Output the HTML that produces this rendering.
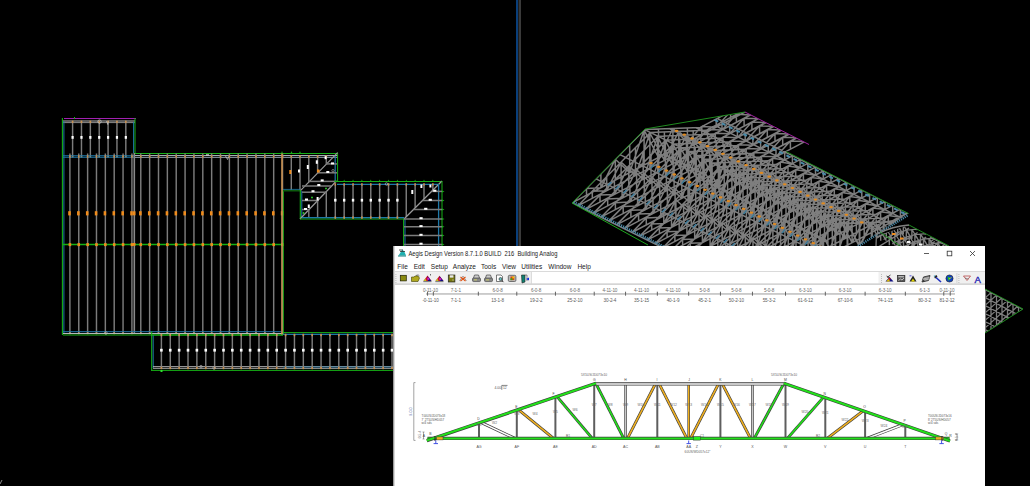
<!DOCTYPE html>
<html><head><meta charset="utf-8"><style>
html,body{margin:0;padding:0;background:#000;width:1030px;height:486px;overflow:hidden;font-family:"Liberation Sans",sans-serif}
#cad{position:absolute;left:0;top:0}
#win{position:absolute;left:393px;top:246px;width:592px;height:240px;background:#fff;overflow:hidden}
</style></head><body>
<svg id="cad" width="1030" height="486" viewBox="0 0 1030 486" shape-rendering="geometricPrecision">
<line x1="64.00" y1="118.50" x2="136.00" y2="118.50" stroke="#a020b0" stroke-width="1"/>
<line x1="63.00" y1="121.00" x2="135.00" y2="121.00" stroke="#b8b8b8" stroke-width="1"/>
<line x1="63.00" y1="122.60" x2="135.00" y2="122.60" stroke="#8a8a8a" stroke-width="1"/>
<line x1="133.60" y1="122.00" x2="133.60" y2="153.00" stroke="#1e78a8" stroke-width="1"/>
<line x1="135.00" y1="118.00" x2="135.00" y2="153.00" stroke="#16b016" stroke-width="1"/>
<line x1="72.60" y1="121.00" x2="72.60" y2="157.00" stroke="#7c7c7c" stroke-width="1.45"/>
<rect x="71.80" y="120.60" width="1.60" height="2.40" fill="#c89050"/>
<rect x="71.80" y="155.30" width="1.60" height="2.40" fill="#c89050"/>
<rect x="71.50" y="136.00" width="2.20" height="2.80" fill="#ffffff"/>
<line x1="81.47" y1="121.00" x2="81.47" y2="157.00" stroke="#7c7c7c" stroke-width="1.45"/>
<rect x="80.67" y="120.60" width="1.60" height="2.40" fill="#c89050"/>
<rect x="80.67" y="155.30" width="1.60" height="2.40" fill="#c89050"/>
<rect x="80.37" y="136.00" width="2.20" height="2.80" fill="#ffffff"/>
<line x1="90.34" y1="121.00" x2="90.34" y2="157.00" stroke="#7c7c7c" stroke-width="1.45"/>
<rect x="89.54" y="120.60" width="1.60" height="2.40" fill="#c89050"/>
<rect x="89.54" y="155.30" width="1.60" height="2.40" fill="#c89050"/>
<rect x="89.24" y="136.00" width="2.20" height="2.80" fill="#ffffff"/>
<line x1="99.21" y1="121.00" x2="99.21" y2="157.00" stroke="#7c7c7c" stroke-width="1.45"/>
<rect x="98.41" y="120.60" width="1.60" height="2.40" fill="#c89050"/>
<rect x="98.41" y="155.30" width="1.60" height="2.40" fill="#c89050"/>
<rect x="98.11" y="136.00" width="2.20" height="2.80" fill="#ffffff"/>
<line x1="108.08" y1="121.00" x2="108.08" y2="157.00" stroke="#7c7c7c" stroke-width="1.45"/>
<rect x="107.28" y="120.60" width="1.60" height="2.40" fill="#c89050"/>
<rect x="107.28" y="155.30" width="1.60" height="2.40" fill="#c89050"/>
<rect x="106.98" y="136.00" width="2.20" height="2.80" fill="#ffffff"/>
<line x1="116.95" y1="121.00" x2="116.95" y2="157.00" stroke="#7c7c7c" stroke-width="1.45"/>
<rect x="116.15" y="120.60" width="1.60" height="2.40" fill="#c89050"/>
<rect x="116.15" y="155.30" width="1.60" height="2.40" fill="#c89050"/>
<rect x="115.85" y="136.00" width="2.20" height="2.80" fill="#ffffff"/>
<line x1="125.82" y1="121.00" x2="125.82" y2="157.00" stroke="#7c7c7c" stroke-width="1.45"/>
<rect x="125.02" y="120.60" width="1.60" height="2.40" fill="#c89050"/>
<rect x="125.02" y="155.30" width="1.60" height="2.40" fill="#c89050"/>
<rect x="124.72" y="136.00" width="2.20" height="2.80" fill="#ffffff"/>
<rect x="74.00" y="117.00" width="1.00" height="2.00" fill="#16b016"/>
<line x1="62.40" y1="118.00" x2="62.40" y2="335.00" stroke="#16b016" stroke-width="1.1"/>
<line x1="63.90" y1="121.00" x2="63.90" y2="333.00" stroke="#1e78a8" stroke-width="1"/>
<line x1="63.00" y1="155.70" x2="135.00" y2="155.70" stroke="#1e78a8" stroke-width="1.1"/>
<line x1="63.00" y1="157.30" x2="135.00" y2="157.30" stroke="#1e78a8" stroke-width="1.1"/>
<line x1="135.00" y1="153.50" x2="338.00" y2="153.50" stroke="#16b016" stroke-width="1"/>
<line x1="135.00" y1="155.60" x2="338.00" y2="155.60" stroke="#b4c0c8" stroke-width="1"/>
<line x1="135.00" y1="157.40" x2="338.00" y2="157.40" stroke="#8898a4" stroke-width="1"/>
<line x1="69.90" y1="153.50" x2="69.90" y2="334.00" stroke="#7c7c7c" stroke-width="1.45"/>
<rect x="69.10" y="155.30" width="1.60" height="2.40" fill="#c89050"/>
<rect x="69.10" y="331.80" width="1.60" height="2.40" fill="#c89050"/>
<line x1="78.76" y1="153.50" x2="78.76" y2="334.00" stroke="#7c7c7c" stroke-width="1.45"/>
<rect x="77.96" y="155.30" width="1.60" height="2.40" fill="#c89050"/>
<rect x="77.96" y="331.80" width="1.60" height="2.40" fill="#c89050"/>
<line x1="87.62" y1="153.50" x2="87.62" y2="334.00" stroke="#7c7c7c" stroke-width="1.45"/>
<rect x="86.82" y="155.30" width="1.60" height="2.40" fill="#c89050"/>
<rect x="86.82" y="331.80" width="1.60" height="2.40" fill="#c89050"/>
<line x1="96.48" y1="153.50" x2="96.48" y2="334.00" stroke="#7c7c7c" stroke-width="1.45"/>
<rect x="95.68" y="155.30" width="1.60" height="2.40" fill="#c89050"/>
<rect x="95.68" y="331.80" width="1.60" height="2.40" fill="#c89050"/>
<line x1="105.34" y1="153.50" x2="105.34" y2="334.00" stroke="#7c7c7c" stroke-width="1.45"/>
<rect x="104.54" y="155.30" width="1.60" height="2.40" fill="#c89050"/>
<rect x="104.54" y="331.80" width="1.60" height="2.40" fill="#c89050"/>
<line x1="114.20" y1="153.50" x2="114.20" y2="334.00" stroke="#7c7c7c" stroke-width="1.45"/>
<rect x="113.40" y="155.30" width="1.60" height="2.40" fill="#c89050"/>
<rect x="113.40" y="331.80" width="1.60" height="2.40" fill="#c89050"/>
<line x1="123.06" y1="153.50" x2="123.06" y2="334.00" stroke="#7c7c7c" stroke-width="1.45"/>
<rect x="122.26" y="155.30" width="1.60" height="2.40" fill="#c89050"/>
<rect x="122.26" y="331.80" width="1.60" height="2.40" fill="#c89050"/>
<line x1="131.92" y1="153.50" x2="131.92" y2="334.00" stroke="#7c7c7c" stroke-width="1.45"/>
<rect x="131.12" y="155.30" width="1.60" height="2.40" fill="#c89050"/>
<rect x="131.12" y="331.80" width="1.60" height="2.40" fill="#c89050"/>
<line x1="140.78" y1="153.50" x2="140.78" y2="334.00" stroke="#7c7c7c" stroke-width="1.45"/>
<rect x="139.98" y="155.30" width="1.60" height="2.40" fill="#c89050"/>
<rect x="139.98" y="331.80" width="1.60" height="2.40" fill="#c89050"/>
<line x1="149.64" y1="153.50" x2="149.64" y2="334.00" stroke="#7c7c7c" stroke-width="1.45"/>
<rect x="148.84" y="155.30" width="1.60" height="2.40" fill="#c89050"/>
<rect x="148.84" y="331.80" width="1.60" height="2.40" fill="#c89050"/>
<line x1="158.50" y1="153.50" x2="158.50" y2="334.00" stroke="#7c7c7c" stroke-width="1.45"/>
<rect x="157.70" y="155.30" width="1.60" height="2.40" fill="#c89050"/>
<rect x="157.70" y="331.80" width="1.60" height="2.40" fill="#c89050"/>
<line x1="167.36" y1="153.50" x2="167.36" y2="334.00" stroke="#7c7c7c" stroke-width="1.45"/>
<rect x="166.56" y="155.30" width="1.60" height="2.40" fill="#c89050"/>
<rect x="166.56" y="331.80" width="1.60" height="2.40" fill="#c89050"/>
<line x1="176.22" y1="153.50" x2="176.22" y2="334.00" stroke="#7c7c7c" stroke-width="1.45"/>
<rect x="175.42" y="155.30" width="1.60" height="2.40" fill="#c89050"/>
<rect x="175.42" y="331.80" width="1.60" height="2.40" fill="#c89050"/>
<line x1="185.08" y1="153.50" x2="185.08" y2="334.00" stroke="#7c7c7c" stroke-width="1.45"/>
<rect x="184.28" y="155.30" width="1.60" height="2.40" fill="#c89050"/>
<rect x="184.28" y="331.80" width="1.60" height="2.40" fill="#c89050"/>
<line x1="193.94" y1="153.50" x2="193.94" y2="334.00" stroke="#7c7c7c" stroke-width="1.45"/>
<rect x="193.14" y="155.30" width="1.60" height="2.40" fill="#c89050"/>
<rect x="193.14" y="331.80" width="1.60" height="2.40" fill="#c89050"/>
<line x1="202.80" y1="153.50" x2="202.80" y2="334.00" stroke="#7c7c7c" stroke-width="1.45"/>
<rect x="202.00" y="155.30" width="1.60" height="2.40" fill="#c89050"/>
<rect x="202.00" y="331.80" width="1.60" height="2.40" fill="#c89050"/>
<line x1="211.66" y1="153.50" x2="211.66" y2="334.00" stroke="#7c7c7c" stroke-width="1.45"/>
<rect x="210.86" y="155.30" width="1.60" height="2.40" fill="#c89050"/>
<rect x="210.86" y="331.80" width="1.60" height="2.40" fill="#c89050"/>
<line x1="220.52" y1="153.50" x2="220.52" y2="334.00" stroke="#7c7c7c" stroke-width="1.45"/>
<rect x="219.72" y="155.30" width="1.60" height="2.40" fill="#c89050"/>
<rect x="219.72" y="331.80" width="1.60" height="2.40" fill="#c89050"/>
<line x1="229.38" y1="153.50" x2="229.38" y2="334.00" stroke="#7c7c7c" stroke-width="1.45"/>
<rect x="228.58" y="155.30" width="1.60" height="2.40" fill="#c89050"/>
<rect x="228.58" y="331.80" width="1.60" height="2.40" fill="#c89050"/>
<line x1="238.24" y1="153.50" x2="238.24" y2="334.00" stroke="#7c7c7c" stroke-width="1.45"/>
<rect x="237.44" y="155.30" width="1.60" height="2.40" fill="#c89050"/>
<rect x="237.44" y="331.80" width="1.60" height="2.40" fill="#c89050"/>
<line x1="247.10" y1="153.50" x2="247.10" y2="334.00" stroke="#7c7c7c" stroke-width="1.45"/>
<rect x="246.30" y="155.30" width="1.60" height="2.40" fill="#c89050"/>
<rect x="246.30" y="331.80" width="1.60" height="2.40" fill="#c89050"/>
<line x1="255.96" y1="153.50" x2="255.96" y2="334.00" stroke="#7c7c7c" stroke-width="1.45"/>
<rect x="255.16" y="155.30" width="1.60" height="2.40" fill="#c89050"/>
<rect x="255.16" y="331.80" width="1.60" height="2.40" fill="#c89050"/>
<line x1="264.82" y1="153.50" x2="264.82" y2="334.00" stroke="#7c7c7c" stroke-width="1.45"/>
<rect x="264.02" y="155.30" width="1.60" height="2.40" fill="#c89050"/>
<rect x="264.02" y="331.80" width="1.60" height="2.40" fill="#c89050"/>
<line x1="273.68" y1="153.50" x2="273.68" y2="334.00" stroke="#7c7c7c" stroke-width="1.45"/>
<rect x="272.88" y="155.30" width="1.60" height="2.40" fill="#c89050"/>
<rect x="272.88" y="331.80" width="1.60" height="2.40" fill="#c89050"/>
<line x1="282.54" y1="153.50" x2="282.54" y2="334.00" stroke="#7c7c7c" stroke-width="1.45"/>
<rect x="281.74" y="155.30" width="1.60" height="2.40" fill="#c89050"/>
<rect x="281.74" y="331.80" width="1.60" height="2.40" fill="#c89050"/>
<line x1="134.30" y1="153.00" x2="134.30" y2="334.00" stroke="#8a8a8a" stroke-width="1.6"/>
<line x1="63.00" y1="244.50" x2="283.00" y2="244.50" stroke="#16b016" stroke-width="1.3"/>
<rect x="68.20" y="211.20" width="2.60" height="4.20" fill="#f08c1c"/>
<rect x="68.60" y="243.10" width="2.60" height="3.00" fill="#f08c1c"/>
<rect x="77.06" y="211.20" width="2.60" height="4.20" fill="#f08c1c"/>
<rect x="77.46" y="243.10" width="2.60" height="3.00" fill="#f08c1c"/>
<rect x="85.92" y="211.20" width="2.60" height="4.20" fill="#f08c1c"/>
<rect x="86.32" y="243.10" width="2.60" height="3.00" fill="#f08c1c"/>
<rect x="94.78" y="211.20" width="2.60" height="4.20" fill="#f08c1c"/>
<rect x="95.18" y="243.10" width="2.60" height="3.00" fill="#f08c1c"/>
<rect x="103.64" y="211.20" width="2.60" height="4.20" fill="#f08c1c"/>
<rect x="104.04" y="243.10" width="2.60" height="3.00" fill="#f08c1c"/>
<rect x="112.50" y="211.20" width="2.60" height="4.20" fill="#f08c1c"/>
<rect x="112.90" y="243.10" width="2.60" height="3.00" fill="#f08c1c"/>
<rect x="121.36" y="211.20" width="2.60" height="4.20" fill="#f08c1c"/>
<rect x="121.76" y="243.10" width="2.60" height="3.00" fill="#f08c1c"/>
<rect x="130.22" y="211.20" width="2.60" height="4.20" fill="#f08c1c"/>
<rect x="130.62" y="243.10" width="2.60" height="3.00" fill="#f08c1c"/>
<rect x="139.08" y="211.20" width="2.60" height="4.20" fill="#f08c1c"/>
<rect x="139.48" y="243.10" width="2.60" height="3.00" fill="#f08c1c"/>
<rect x="147.94" y="211.20" width="2.60" height="4.20" fill="#f08c1c"/>
<rect x="148.34" y="243.10" width="2.60" height="3.00" fill="#f08c1c"/>
<rect x="156.80" y="211.20" width="2.60" height="4.20" fill="#f08c1c"/>
<rect x="157.20" y="243.10" width="2.60" height="3.00" fill="#f08c1c"/>
<rect x="165.66" y="211.20" width="2.60" height="4.20" fill="#f08c1c"/>
<rect x="166.06" y="243.10" width="2.60" height="3.00" fill="#f08c1c"/>
<rect x="174.52" y="211.20" width="2.60" height="4.20" fill="#f08c1c"/>
<rect x="174.92" y="243.10" width="2.60" height="3.00" fill="#f08c1c"/>
<rect x="183.38" y="211.20" width="2.60" height="4.20" fill="#f08c1c"/>
<rect x="183.78" y="243.10" width="2.60" height="3.00" fill="#f08c1c"/>
<rect x="192.24" y="211.20" width="2.60" height="4.20" fill="#f08c1c"/>
<rect x="192.64" y="243.10" width="2.60" height="3.00" fill="#f08c1c"/>
<rect x="201.10" y="211.20" width="2.60" height="4.20" fill="#f08c1c"/>
<rect x="201.50" y="243.10" width="2.60" height="3.00" fill="#f08c1c"/>
<rect x="209.96" y="211.20" width="2.60" height="4.20" fill="#f08c1c"/>
<rect x="210.36" y="243.10" width="2.60" height="3.00" fill="#f08c1c"/>
<rect x="218.82" y="211.20" width="2.60" height="4.20" fill="#f08c1c"/>
<rect x="219.22" y="243.10" width="2.60" height="3.00" fill="#f08c1c"/>
<rect x="227.68" y="211.20" width="2.60" height="4.20" fill="#f08c1c"/>
<rect x="228.08" y="243.10" width="2.60" height="3.00" fill="#f08c1c"/>
<rect x="236.54" y="211.20" width="2.60" height="4.20" fill="#f08c1c"/>
<rect x="236.94" y="243.10" width="2.60" height="3.00" fill="#f08c1c"/>
<rect x="245.40" y="211.20" width="2.60" height="4.20" fill="#f08c1c"/>
<rect x="245.80" y="243.10" width="2.60" height="3.00" fill="#f08c1c"/>
<rect x="254.26" y="211.20" width="2.60" height="4.20" fill="#f08c1c"/>
<rect x="254.66" y="243.10" width="2.60" height="3.00" fill="#f08c1c"/>
<rect x="263.12" y="211.20" width="2.60" height="4.20" fill="#f08c1c"/>
<rect x="263.52" y="243.10" width="2.60" height="3.00" fill="#f08c1c"/>
<rect x="271.98" y="211.20" width="2.60" height="4.20" fill="#f08c1c"/>
<rect x="272.38" y="243.10" width="2.60" height="3.00" fill="#f08c1c"/>
<rect x="280.84" y="211.20" width="2.60" height="4.20" fill="#f08c1c"/>
<rect x="281.24" y="243.10" width="2.60" height="3.00" fill="#f08c1c"/>
<rect x="133.00" y="211.30" width="2.50" height="4.00" fill="#f08c1c"/>
<rect x="133.00" y="243.00" width="2.50" height="2.80" fill="#f08c1c"/>
<line x1="63.00" y1="331.70" x2="283.00" y2="331.70" stroke="#1e78a8" stroke-width="1"/>
<line x1="63.00" y1="333.50" x2="283.00" y2="333.50" stroke="#b8b8b8" stroke-width="1"/>
<line x1="63.00" y1="335.00" x2="283.00" y2="335.00" stroke="#16b016" stroke-width="1"/>
<circle cx="106" cy="333" r="1.3" fill="none" stroke="#bbb" stroke-width="0.6"/>
<line x1="282.00" y1="153.00" x2="282.00" y2="335.00" stroke="#c89050" stroke-width="1.6"/>
<line x1="283.40" y1="190.00" x2="283.40" y2="335.00" stroke="#16b016" stroke-width="0.9"/>
<path d="M281,153.5 L282,151 L283,153.5 Z" fill="#16b016"/>
<path d="M290.5,153.5 L291.5,151 L292.5,153.5 Z" fill="#16b016"/>
<path d="M299,153.5 L300,151 L301,153.5 Z" fill="#16b016"/>
<line x1="337.60" y1="152.60" x2="337.60" y2="181.50" stroke="#16b016" stroke-width="1"/>
<line x1="335.20" y1="156.00" x2="335.20" y2="182.00" stroke="#1e78a8" stroke-width="1.2"/>
<line x1="337.60" y1="152.60" x2="300.00" y2="191.20" stroke="#9a9a9a" stroke-width="1.2"/>
<line x1="291.30" y1="156.00" x2="291.30" y2="190.00" stroke="#7c7c7c" stroke-width="1.45"/>
<rect x="290.50" y="155.30" width="1.60" height="2.40" fill="#c89050"/>
<line x1="300.00" y1="156.00" x2="300.00" y2="190.00" stroke="#7c7c7c" stroke-width="1.45"/>
<rect x="299.20" y="155.30" width="1.60" height="2.40" fill="#c89050"/>
<line x1="308.80" y1="156.00" x2="308.80" y2="182.17" stroke="#7c7c7c" stroke-width="1.45"/>
<rect x="308.00" y="155.30" width="1.60" height="2.40" fill="#c89050"/>
<line x1="317.60" y1="156.00" x2="317.60" y2="173.13" stroke="#7c7c7c" stroke-width="1.45"/>
<rect x="316.80" y="155.30" width="1.60" height="2.40" fill="#c89050"/>
<line x1="326.30" y1="156.00" x2="326.30" y2="164.20" stroke="#7c7c7c" stroke-width="1.45"/>
<rect x="325.50" y="155.30" width="1.60" height="2.40" fill="#c89050"/>
<line x1="283.00" y1="190.60" x2="300.00" y2="190.60" stroke="#0d5a0d" stroke-width="1.8"/>
<line x1="283.00" y1="189.40" x2="300.00" y2="189.40" stroke="#1e78a8" stroke-width="0.8"/>
<line x1="326.30" y1="163.90" x2="337.00" y2="163.90" stroke="#7c7c7c" stroke-width="1.5"/>
<line x1="317.60" y1="172.80" x2="337.00" y2="172.80" stroke="#7c7c7c" stroke-width="1.5"/>
<line x1="308.80" y1="181.40" x2="337.00" y2="181.40" stroke="#7c7c7c" stroke-width="1.5"/>
<rect x="331.00" y="162.40" width="3.00" height="2.00" fill="#ffffff"/>
<rect x="326.30" y="171.00" width="3.00" height="2.00" fill="#ffffff"/>
<rect x="320.70" y="179.40" width="3.00" height="2.00" fill="#ffffff"/>
<rect x="306.80" y="165.00" width="2.00" height="4.00" fill="#ffffff"/>
<rect x="298.00" y="169.50" width="2.00" height="3.00" fill="#ffffff"/>
<rect x="315.80" y="160.30" width="2.00" height="3.50" fill="#ffffff"/>
<rect x="324.60" y="156.20" width="2.00" height="3.00" fill="#ffffff"/>
<rect x="289.30" y="170.00" width="2.00" height="4.00" fill="#f08c1c"/>
<rect x="317.00" y="169.50" width="2.50" height="3.00" fill="#f08c1c"/>
<circle cx="333" cy="170.7" r="1.2" fill="none" stroke="#bbb" stroke-width="0.6"/>
<line x1="300.30" y1="190.00" x2="300.30" y2="219.00" stroke="#16b016" stroke-width="1.1"/>
<line x1="301.80" y1="191.00" x2="301.80" y2="218.00" stroke="#1e78a8" stroke-width="1"/>
<line x1="335.50" y1="182.00" x2="300.00" y2="219.00" stroke="#9a9a9a" stroke-width="1.2"/>
<line x1="302.00" y1="186.00" x2="331.50" y2="186.00" stroke="#7c7c7c" stroke-width="1.5"/>
<line x1="302.00" y1="192.20" x2="326.60" y2="192.20" stroke="#7c7c7c" stroke-width="1.5"/>
<line x1="302.00" y1="200.50" x2="318.80" y2="200.50" stroke="#7c7c7c" stroke-width="1.5"/>
<line x1="302.00" y1="209.50" x2="309.50" y2="209.50" stroke="#7c7c7c" stroke-width="1.5"/>
<line x1="308.80" y1="209.83" x2="308.80" y2="218.00" stroke="#7c7c7c" stroke-width="1.45"/>
<line x1="317.60" y1="200.66" x2="317.60" y2="218.00" stroke="#7c7c7c" stroke-width="1.45"/>
<line x1="326.30" y1="191.59" x2="326.30" y2="218.00" stroke="#7c7c7c" stroke-width="1.45"/>
<rect x="317.30" y="184.00" width="3.00" height="2.00" fill="#ffffff"/>
<rect x="311.50" y="190.20" width="3.00" height="2.00" fill="#ffffff"/>
<rect x="305.00" y="198.50" width="3.00" height="2.00" fill="#ffffff"/>
<rect x="304.00" y="208.00" width="3.00" height="2.00" fill="#ffffff"/>
<rect x="307.80" y="204.50" width="2.00" height="3.50" fill="#ffffff"/>
<rect x="316.60" y="197.00" width="2.00" height="3.50" fill="#ffffff"/>
<rect x="311.20" y="196.70" width="1.60" height="1.60" fill="#30e030"/>
<rect x="325.20" y="187.70" width="1.60" height="1.60" fill="#30e030"/>
<rect x="302.70" y="212.20" width="1.60" height="1.60" fill="#30e030"/>
<line x1="335.00" y1="181.50" x2="442.00" y2="181.50" stroke="#16b016" stroke-width="1"/>
<line x1="337.00" y1="184.40" x2="438.60" y2="184.40" stroke="#1e78a8" stroke-width="1.3"/>
<line x1="300.00" y1="219.00" x2="404.00" y2="219.00" stroke="#16b016" stroke-width="1"/>
<line x1="302.00" y1="217.60" x2="404.00" y2="217.60" stroke="#1e78a8" stroke-width="1.2"/>
<line x1="335.30" y1="184.40" x2="335.30" y2="218.00" stroke="#7c7c7c" stroke-width="1.45"/>
<rect x="334.50" y="183.20" width="1.60" height="2.40" fill="#c89050"/>
<rect x="334.50" y="216.40" width="1.60" height="2.40" fill="#c89050"/>
<rect x="334.10" y="198.80" width="2.40" height="2.80" fill="#ffffff"/>
<path d="M334.3,182 L335.3,179.5 L336.3,182 Z" fill="#16b016"/>
<line x1="344.17" y1="184.40" x2="344.17" y2="218.00" stroke="#7c7c7c" stroke-width="1.45"/>
<rect x="343.37" y="183.20" width="1.60" height="2.40" fill="#c89050"/>
<rect x="343.37" y="216.40" width="1.60" height="2.40" fill="#c89050"/>
<rect x="342.97" y="198.80" width="2.40" height="2.80" fill="#ffffff"/>
<path d="M343.17,182 L344.17,179.5 L345.17,182 Z" fill="#16b016"/>
<line x1="353.04" y1="184.40" x2="353.04" y2="218.00" stroke="#7c7c7c" stroke-width="1.45"/>
<rect x="352.24" y="183.20" width="1.60" height="2.40" fill="#c89050"/>
<rect x="352.24" y="216.40" width="1.60" height="2.40" fill="#c89050"/>
<rect x="351.84" y="198.80" width="2.40" height="2.80" fill="#ffffff"/>
<path d="M352.04,182 L353.04,179.5 L354.04,182 Z" fill="#16b016"/>
<line x1="361.91" y1="184.40" x2="361.91" y2="218.00" stroke="#7c7c7c" stroke-width="1.45"/>
<rect x="361.11" y="183.20" width="1.60" height="2.40" fill="#c89050"/>
<rect x="361.11" y="216.40" width="1.60" height="2.40" fill="#c89050"/>
<rect x="360.71" y="198.80" width="2.40" height="2.80" fill="#ffffff"/>
<path d="M360.91,182 L361.91,179.5 L362.91,182 Z" fill="#16b016"/>
<line x1="370.78" y1="184.40" x2="370.78" y2="218.00" stroke="#7c7c7c" stroke-width="1.45"/>
<rect x="369.98" y="183.20" width="1.60" height="2.40" fill="#c89050"/>
<rect x="369.98" y="216.40" width="1.60" height="2.40" fill="#c89050"/>
<rect x="369.58" y="198.80" width="2.40" height="2.80" fill="#ffffff"/>
<path d="M369.78000000000003,182 L370.78000000000003,179.5 L371.78000000000003,182 Z" fill="#16b016"/>
<line x1="379.65" y1="184.40" x2="379.65" y2="218.00" stroke="#7c7c7c" stroke-width="1.45"/>
<rect x="378.85" y="183.20" width="1.60" height="2.40" fill="#c89050"/>
<rect x="378.85" y="216.40" width="1.60" height="2.40" fill="#c89050"/>
<rect x="378.45" y="198.80" width="2.40" height="2.80" fill="#ffffff"/>
<path d="M378.65,182 L379.65,179.5 L380.65,182 Z" fill="#16b016"/>
<line x1="388.52" y1="184.40" x2="388.52" y2="218.00" stroke="#7c7c7c" stroke-width="1.45"/>
<rect x="387.72" y="183.20" width="1.60" height="2.40" fill="#c89050"/>
<rect x="387.72" y="216.40" width="1.60" height="2.40" fill="#c89050"/>
<rect x="387.32" y="198.80" width="2.40" height="2.80" fill="#ffffff"/>
<path d="M387.52,182 L388.52,179.5 L389.52,182 Z" fill="#16b016"/>
<line x1="397.39" y1="184.40" x2="397.39" y2="218.00" stroke="#7c7c7c" stroke-width="1.45"/>
<rect x="396.59" y="183.20" width="1.60" height="2.40" fill="#c89050"/>
<rect x="396.59" y="216.40" width="1.60" height="2.40" fill="#c89050"/>
<rect x="396.19" y="198.80" width="2.40" height="2.80" fill="#ffffff"/>
<path d="M396.39,182 L397.39,179.5 L398.39,182 Z" fill="#16b016"/>
<line x1="406.26" y1="184.40" x2="406.26" y2="216.74" stroke="#7c7c7c" stroke-width="1.45"/>
<rect x="405.46" y="183.20" width="1.60" height="2.40" fill="#c89050"/>
<path d="M405.26,182 L406.26,179.5 L407.26,182 Z" fill="#16b016"/>
<line x1="415.13" y1="184.40" x2="415.13" y2="207.87" stroke="#7c7c7c" stroke-width="1.45"/>
<rect x="414.33" y="183.20" width="1.60" height="2.40" fill="#c89050"/>
<path d="M414.13,182 L415.13,179.5 L416.13,182 Z" fill="#16b016"/>
<line x1="424.00" y1="184.40" x2="424.00" y2="199.00" stroke="#7c7c7c" stroke-width="1.45"/>
<rect x="423.20" y="183.20" width="1.60" height="2.40" fill="#c89050"/>
<path d="M423.0,182 L424.0,179.5 L425.0,182 Z" fill="#16b016"/>
<line x1="432.87" y1="184.40" x2="432.87" y2="190.13" stroke="#7c7c7c" stroke-width="1.45"/>
<rect x="432.07" y="183.20" width="1.60" height="2.40" fill="#c89050"/>
<path d="M431.87,182 L432.87,179.5 L433.87,182 Z" fill="#16b016"/>
<rect x="411.30" y="190.00" width="2.00" height="4.00" fill="#ffffff"/>
<rect x="420.40" y="184.50" width="2.00" height="3.50" fill="#ffffff"/>
<rect x="429.40" y="184.50" width="2.00" height="3.00" fill="#ffffff"/>
<circle cx="386.5" cy="184" r="1.3" fill="none" stroke="#bbb" stroke-width="0.6"/>
<line x1="442.00" y1="181.00" x2="404.00" y2="219.00" stroke="#9a9a9a" stroke-width="1.2"/>
<line x1="442.00" y1="181.00" x2="442.00" y2="246.00" stroke="#16b016" stroke-width="1"/>
<line x1="438.60" y1="184.00" x2="438.60" y2="246.00" stroke="#1e78a8" stroke-width="1.3"/>
<line x1="403.60" y1="219.00" x2="403.60" y2="246.00" stroke="#16b016" stroke-width="1"/>
<line x1="405.00" y1="219.00" x2="405.00" y2="246.00" stroke="#1e78a8" stroke-width="1"/>
<line x1="431.60" y1="191.40" x2="442.00" y2="191.40" stroke="#7c7c7c" stroke-width="1.5"/>
<rect x="433.20" y="189.70" width="3.20" height="2.00" fill="#ffffff"/>
<path d="M442,190.4 L444.5,191.4 L442,192.4 Z" fill="#16b016"/>
<line x1="422.50" y1="200.50" x2="442.00" y2="200.50" stroke="#7c7c7c" stroke-width="1.5"/>
<rect x="428.65" y="198.80" width="3.20" height="2.00" fill="#ffffff"/>
<path d="M442,199.5 L444.5,200.5 L442,201.5 Z" fill="#16b016"/>
<line x1="413.50" y1="209.50" x2="442.00" y2="209.50" stroke="#7c7c7c" stroke-width="1.5"/>
<rect x="424.15" y="207.80" width="3.20" height="2.00" fill="#ffffff"/>
<path d="M442,208.5 L444.5,209.5 L442,210.5 Z" fill="#16b016"/>
<line x1="404.10" y1="218.90" x2="442.00" y2="218.90" stroke="#7c7c7c" stroke-width="1.5"/>
<rect x="419.45" y="217.20" width="3.20" height="2.00" fill="#ffffff"/>
<path d="M442,217.9 L444.5,218.9 L442,219.9 Z" fill="#16b016"/>
<line x1="404.00" y1="226.80" x2="442.00" y2="226.80" stroke="#7c7c7c" stroke-width="1.5"/>
<rect x="419.40" y="225.10" width="3.20" height="2.00" fill="#ffffff"/>
<path d="M442,225.8 L444.5,226.8 L442,227.8 Z" fill="#16b016"/>
<line x1="404.00" y1="235.50" x2="442.00" y2="235.50" stroke="#7c7c7c" stroke-width="1.5"/>
<rect x="419.40" y="233.80" width="3.20" height="2.00" fill="#ffffff"/>
<path d="M442,234.5 L444.5,235.5 L442,236.5 Z" fill="#16b016"/>
<line x1="404.00" y1="244.40" x2="442.00" y2="244.40" stroke="#7c7c7c" stroke-width="1.5"/>
<rect x="419.40" y="242.70" width="3.20" height="2.00" fill="#ffffff"/>
<path d="M442,243.4 L444.5,244.4 L442,245.4 Z" fill="#16b016"/>
<line x1="151.70" y1="331.60" x2="151.70" y2="370.40" stroke="#16b016" stroke-width="1.1"/>
<line x1="153.20" y1="335.00" x2="153.20" y2="368.00" stroke="#1e78a8" stroke-width="1"/>
<line x1="151.00" y1="335.00" x2="283.00" y2="335.00" stroke="#16b016" stroke-width="1"/>
<line x1="283.00" y1="332.60" x2="400.00" y2="332.60" stroke="#16b016" stroke-width="1"/>
<line x1="283.00" y1="334.30" x2="400.00" y2="334.30" stroke="#1e78a8" stroke-width="1.2"/>
<line x1="151.00" y1="370.40" x2="400.00" y2="370.40" stroke="#16b016" stroke-width="1"/>
<line x1="153.00" y1="366.70" x2="400.00" y2="366.70" stroke="#b8b8b8" stroke-width="1"/>
<line x1="153.00" y1="368.40" x2="400.00" y2="368.40" stroke="#9a9a9a" stroke-width="1"/>
<line x1="283.00" y1="367.00" x2="400.00" y2="367.00" stroke="#1e78a8" stroke-width="0.8"/>
<line x1="161.40" y1="334.00" x2="161.40" y2="369.00" stroke="#7c7c7c" stroke-width="1.45"/>
<rect x="160.60" y="333.80" width="1.60" height="2.40" fill="#c89050"/>
<rect x="160.60" y="366.80" width="1.60" height="2.40" fill="#c89050"/>
<rect x="160.10" y="348.80" width="2.60" height="2.80" fill="#ffffff"/>
<line x1="170.27" y1="334.00" x2="170.27" y2="369.00" stroke="#7c7c7c" stroke-width="1.45"/>
<rect x="169.47" y="333.80" width="1.60" height="2.40" fill="#c89050"/>
<rect x="169.47" y="366.80" width="1.60" height="2.40" fill="#c89050"/>
<rect x="168.97" y="348.80" width="2.60" height="2.80" fill="#ffffff"/>
<line x1="179.14" y1="334.00" x2="179.14" y2="369.00" stroke="#7c7c7c" stroke-width="1.45"/>
<rect x="178.34" y="333.80" width="1.60" height="2.40" fill="#c89050"/>
<rect x="178.34" y="366.80" width="1.60" height="2.40" fill="#c89050"/>
<rect x="177.84" y="348.80" width="2.60" height="2.80" fill="#ffffff"/>
<line x1="188.01" y1="334.00" x2="188.01" y2="369.00" stroke="#7c7c7c" stroke-width="1.45"/>
<rect x="187.21" y="333.80" width="1.60" height="2.40" fill="#c89050"/>
<rect x="187.21" y="366.80" width="1.60" height="2.40" fill="#c89050"/>
<rect x="186.71" y="348.80" width="2.60" height="2.80" fill="#ffffff"/>
<line x1="196.88" y1="334.00" x2="196.88" y2="369.00" stroke="#7c7c7c" stroke-width="1.45"/>
<rect x="196.08" y="333.80" width="1.60" height="2.40" fill="#c89050"/>
<rect x="196.08" y="366.80" width="1.60" height="2.40" fill="#c89050"/>
<rect x="195.58" y="348.80" width="2.60" height="2.80" fill="#ffffff"/>
<line x1="205.75" y1="334.00" x2="205.75" y2="369.00" stroke="#7c7c7c" stroke-width="1.45"/>
<rect x="204.95" y="333.80" width="1.60" height="2.40" fill="#c89050"/>
<rect x="204.95" y="366.80" width="1.60" height="2.40" fill="#c89050"/>
<rect x="204.45" y="348.80" width="2.60" height="2.80" fill="#ffffff"/>
<line x1="214.62" y1="334.00" x2="214.62" y2="369.00" stroke="#7c7c7c" stroke-width="1.45"/>
<rect x="213.82" y="333.80" width="1.60" height="2.40" fill="#c89050"/>
<rect x="213.82" y="366.80" width="1.60" height="2.40" fill="#c89050"/>
<rect x="213.32" y="348.80" width="2.60" height="2.80" fill="#ffffff"/>
<line x1="223.49" y1="334.00" x2="223.49" y2="369.00" stroke="#7c7c7c" stroke-width="1.45"/>
<rect x="222.69" y="333.80" width="1.60" height="2.40" fill="#c89050"/>
<rect x="222.69" y="366.80" width="1.60" height="2.40" fill="#c89050"/>
<rect x="222.19" y="348.80" width="2.60" height="2.80" fill="#ffffff"/>
<line x1="232.36" y1="334.00" x2="232.36" y2="369.00" stroke="#7c7c7c" stroke-width="1.45"/>
<rect x="231.56" y="333.80" width="1.60" height="2.40" fill="#c89050"/>
<rect x="231.56" y="366.80" width="1.60" height="2.40" fill="#c89050"/>
<rect x="231.06" y="348.80" width="2.60" height="2.80" fill="#ffffff"/>
<line x1="241.23" y1="334.00" x2="241.23" y2="369.00" stroke="#7c7c7c" stroke-width="1.45"/>
<rect x="240.43" y="333.80" width="1.60" height="2.40" fill="#c89050"/>
<rect x="240.43" y="366.80" width="1.60" height="2.40" fill="#c89050"/>
<rect x="239.93" y="348.80" width="2.60" height="2.80" fill="#ffffff"/>
<line x1="250.10" y1="334.00" x2="250.10" y2="369.00" stroke="#7c7c7c" stroke-width="1.45"/>
<rect x="249.30" y="333.80" width="1.60" height="2.40" fill="#c89050"/>
<rect x="249.30" y="366.80" width="1.60" height="2.40" fill="#c89050"/>
<rect x="248.80" y="348.80" width="2.60" height="2.80" fill="#ffffff"/>
<line x1="258.97" y1="334.00" x2="258.97" y2="369.00" stroke="#7c7c7c" stroke-width="1.45"/>
<rect x="258.17" y="333.80" width="1.60" height="2.40" fill="#c89050"/>
<rect x="258.17" y="366.80" width="1.60" height="2.40" fill="#c89050"/>
<rect x="257.67" y="348.80" width="2.60" height="2.80" fill="#ffffff"/>
<line x1="267.84" y1="334.00" x2="267.84" y2="369.00" stroke="#7c7c7c" stroke-width="1.45"/>
<rect x="267.04" y="333.80" width="1.60" height="2.40" fill="#c89050"/>
<rect x="267.04" y="366.80" width="1.60" height="2.40" fill="#c89050"/>
<rect x="266.54" y="348.80" width="2.60" height="2.80" fill="#ffffff"/>
<line x1="276.71" y1="334.00" x2="276.71" y2="369.00" stroke="#7c7c7c" stroke-width="1.45"/>
<rect x="275.91" y="333.80" width="1.60" height="2.40" fill="#c89050"/>
<rect x="275.91" y="366.80" width="1.60" height="2.40" fill="#c89050"/>
<rect x="275.41" y="348.80" width="2.60" height="2.80" fill="#ffffff"/>
<line x1="285.58" y1="334.00" x2="285.58" y2="369.00" stroke="#7c7c7c" stroke-width="1.45"/>
<rect x="284.78" y="333.80" width="1.60" height="2.40" fill="#c89050"/>
<rect x="284.78" y="366.80" width="1.60" height="2.40" fill="#c89050"/>
<rect x="284.28" y="348.80" width="2.60" height="2.80" fill="#ffffff"/>
<line x1="294.45" y1="334.00" x2="294.45" y2="369.00" stroke="#7c7c7c" stroke-width="1.45"/>
<rect x="293.65" y="333.80" width="1.60" height="2.40" fill="#c89050"/>
<rect x="293.65" y="366.80" width="1.60" height="2.40" fill="#c89050"/>
<rect x="293.15" y="348.80" width="2.60" height="2.80" fill="#ffffff"/>
<line x1="303.32" y1="334.00" x2="303.32" y2="369.00" stroke="#7c7c7c" stroke-width="1.45"/>
<rect x="302.52" y="333.80" width="1.60" height="2.40" fill="#c89050"/>
<rect x="302.52" y="366.80" width="1.60" height="2.40" fill="#c89050"/>
<rect x="302.02" y="348.80" width="2.60" height="2.80" fill="#ffffff"/>
<line x1="312.19" y1="334.00" x2="312.19" y2="369.00" stroke="#7c7c7c" stroke-width="1.45"/>
<rect x="311.39" y="333.80" width="1.60" height="2.40" fill="#c89050"/>
<rect x="311.39" y="366.80" width="1.60" height="2.40" fill="#c89050"/>
<rect x="310.89" y="348.80" width="2.60" height="2.80" fill="#ffffff"/>
<line x1="321.06" y1="334.00" x2="321.06" y2="369.00" stroke="#7c7c7c" stroke-width="1.45"/>
<rect x="320.26" y="333.80" width="1.60" height="2.40" fill="#c89050"/>
<rect x="320.26" y="366.80" width="1.60" height="2.40" fill="#c89050"/>
<rect x="319.76" y="348.80" width="2.60" height="2.80" fill="#ffffff"/>
<line x1="329.93" y1="334.00" x2="329.93" y2="369.00" stroke="#7c7c7c" stroke-width="1.45"/>
<rect x="329.13" y="333.80" width="1.60" height="2.40" fill="#c89050"/>
<rect x="329.13" y="366.80" width="1.60" height="2.40" fill="#c89050"/>
<rect x="328.63" y="348.80" width="2.60" height="2.80" fill="#ffffff"/>
<line x1="338.80" y1="334.00" x2="338.80" y2="369.00" stroke="#7c7c7c" stroke-width="1.45"/>
<rect x="338.00" y="333.80" width="1.60" height="2.40" fill="#c89050"/>
<rect x="338.00" y="366.80" width="1.60" height="2.40" fill="#c89050"/>
<rect x="337.50" y="348.80" width="2.60" height="2.80" fill="#ffffff"/>
<line x1="347.67" y1="334.00" x2="347.67" y2="369.00" stroke="#7c7c7c" stroke-width="1.45"/>
<rect x="346.87" y="333.80" width="1.60" height="2.40" fill="#c89050"/>
<rect x="346.87" y="366.80" width="1.60" height="2.40" fill="#c89050"/>
<rect x="346.37" y="348.80" width="2.60" height="2.80" fill="#ffffff"/>
<line x1="356.54" y1="334.00" x2="356.54" y2="369.00" stroke="#7c7c7c" stroke-width="1.45"/>
<rect x="355.74" y="333.80" width="1.60" height="2.40" fill="#c89050"/>
<rect x="355.74" y="366.80" width="1.60" height="2.40" fill="#c89050"/>
<rect x="355.24" y="348.80" width="2.60" height="2.80" fill="#ffffff"/>
<line x1="365.41" y1="334.00" x2="365.41" y2="369.00" stroke="#7c7c7c" stroke-width="1.45"/>
<rect x="364.61" y="333.80" width="1.60" height="2.40" fill="#c89050"/>
<rect x="364.61" y="366.80" width="1.60" height="2.40" fill="#c89050"/>
<rect x="364.11" y="348.80" width="2.60" height="2.80" fill="#ffffff"/>
<line x1="374.28" y1="334.00" x2="374.28" y2="369.00" stroke="#7c7c7c" stroke-width="1.45"/>
<rect x="373.48" y="333.80" width="1.60" height="2.40" fill="#c89050"/>
<rect x="373.48" y="366.80" width="1.60" height="2.40" fill="#c89050"/>
<rect x="372.98" y="348.80" width="2.60" height="2.80" fill="#ffffff"/>
<line x1="383.15" y1="334.00" x2="383.15" y2="369.00" stroke="#7c7c7c" stroke-width="1.45"/>
<rect x="382.35" y="333.80" width="1.60" height="2.40" fill="#c89050"/>
<rect x="382.35" y="366.80" width="1.60" height="2.40" fill="#c89050"/>
<rect x="381.85" y="348.80" width="2.60" height="2.80" fill="#ffffff"/>
<line x1="392.02" y1="334.00" x2="392.02" y2="369.00" stroke="#7c7c7c" stroke-width="1.45"/>
<rect x="391.22" y="333.80" width="1.60" height="2.40" fill="#c89050"/>
<rect x="391.22" y="366.80" width="1.60" height="2.40" fill="#c89050"/>
<rect x="390.72" y="348.80" width="2.60" height="2.80" fill="#ffffff"/>
<rect x="160.50" y="370.00" width="2.00" height="2.00" fill="#30e030"/>
<circle cx="201" cy="366.6" r="1.3" fill="none" stroke="#bbb" stroke-width="0.6"/>
<circle cx="214" cy="368" r="1.3" fill="none" stroke="#bbb" stroke-width="0.6"/>
<circle cx="99.5" cy="121.6" r="1.7" fill="none" stroke="#ccc" stroke-width="0.7"/>
<path d="M106.5,121 L107.8,124.5 L108.3,121.5" fill="none" stroke="#ccc" stroke-width="0.7"/>
<rect x="206" y="154.3" width="3" height="1.4" fill="#ccc"/>
<path d="M225.5,156 L227.5,159.5 L228.8,156.5" fill="none" stroke="#ccc" stroke-width="0.7"/>
<rect x="516.0" y="0.0" width="2.0" height="246.0" fill="#0a3f7a"/>
<rect x="518.5" y="0.0" width="2.5" height="246.0" fill="#3a3a3a"/>
<defs><clipPath id="c1"><polygon points="572,203 645,129 745,112 809,144.5 799,150 786,151.5 908.5,213.5 858,246 648,246"/><polygon points="877,246 877,236 909,225 949,246"/><polygon points="985,289 1023,309 985,333"/></clipPath></defs>
<g clip-path="url(#c1)">
<path d="M745.0,112.0L572.1,202.9M572.1,202.9L644.6,129.6M644.6,129.6L700.3,127.4M700.3,127.4L745.0,103.9M745.0,112.0L745.0,103.9M572.1,202.9L572.1,202.9M572.1,202.9L586.5,188.4M586.5,195.3L586.5,188.4M586.5,188.4L600.9,187.8M600.9,187.8L600.9,173.8M600.9,187.8L615.3,159.2M615.3,180.2L615.3,159.2M615.3,159.2L629.7,172.6M629.7,172.6L629.7,144.6M629.7,172.6L644.1,130.1M644.1,165.0L644.1,130.1M644.1,130.1L658.5,157.5M658.5,157.5L658.5,129.1M658.5,157.5L672.9,128.5M672.9,149.9L672.9,128.5M672.9,128.5L687.4,142.3M687.4,142.3L687.4,127.9M687.4,142.3L701.8,126.6M701.8,134.7L701.8,126.6M701.8,126.6L716.2,127.2M716.2,127.2L716.2,119.0M716.2,127.2L730.6,111.5M730.6,119.6L730.6,111.5M730.6,111.5L745.0,112.0M745.0,112.0L745.0,103.9M750.8,114.9L577.9,205.8M577.9,205.8L650.4,132.5M650.4,132.5L706.1,130.3M706.1,130.3L750.8,106.8M750.8,114.9L750.8,106.8M577.9,205.8L577.9,205.8M577.9,205.8L592.3,191.2M592.3,198.2L592.3,191.2M592.3,191.2L606.7,190.7M606.7,190.7L606.7,176.7M606.7,190.7L621.1,162.1M621.1,183.1L621.1,162.1M621.1,162.1L635.5,175.5M635.5,175.5L635.5,147.5M635.5,175.5L649.9,133.0M649.9,167.9L649.9,133.0M649.9,133.0L664.4,160.3M664.4,160.3L664.4,132.0M664.4,160.3L678.8,131.4M678.8,152.8L678.8,131.4M678.8,131.4L693.2,145.2M693.2,145.2L693.2,130.8M693.2,145.2L707.6,129.5M707.6,137.6L707.6,129.5M707.6,129.5L722.0,130.0M722.0,130.0L722.0,121.9M722.0,130.0L736.4,114.3M736.4,122.5L736.4,114.3M736.4,114.3L750.8,114.9M750.8,114.9L750.8,106.8M758.5,118.7L585.6,209.6M585.6,209.6L658.1,136.3M658.1,136.3L713.8,134.1M713.8,134.1L758.5,110.6M758.5,118.7L758.5,110.6M585.6,209.6L585.6,209.6M585.6,209.6L600.0,195.0M600.0,202.0L600.0,195.0M600.0,195.0L614.4,194.5M614.4,194.5L614.4,180.5M614.4,194.5L628.8,165.9M628.8,186.9L628.8,165.9M628.8,165.9L643.2,179.3M643.2,179.3L643.2,151.3M643.2,179.3L657.7,136.8M657.7,171.7L657.7,136.8M657.7,136.8L672.1,164.2M672.1,164.2L672.1,135.8M672.1,164.2L686.5,135.2M686.5,156.6L686.5,135.2M686.5,135.2L700.9,149.0M700.9,149.0L700.9,134.6M700.9,149.0L715.3,133.3M715.3,141.4L715.3,133.3M715.3,133.3L729.7,133.8M729.7,133.8L729.7,125.7M729.7,133.8L744.1,118.2M744.1,126.3L744.1,118.2M744.1,118.2L758.5,118.7M758.5,118.7L758.5,110.6M766.3,122.5L593.3,213.4M593.3,213.4L665.8,140.1M665.8,140.1L721.6,137.9M721.6,137.9L766.3,114.4M766.3,122.5L766.3,114.4M593.3,213.4L593.3,213.4M593.3,213.4L607.7,198.9M607.7,205.9L607.7,198.9M607.7,198.9L622.1,198.3M622.1,198.3L622.1,184.3M622.1,198.3L636.6,169.7M636.6,190.7L636.6,169.7M636.6,169.7L651.0,183.1M651.0,183.1L651.0,155.2M651.0,183.1L665.4,140.6M665.4,175.5L665.4,140.6M665.4,140.6L679.8,168.0M679.8,168.0L679.8,139.6M679.8,168.0L694.2,139.0M694.2,160.4L694.2,139.0M694.2,139.0L708.6,152.8M708.6,152.8L708.6,138.4M708.6,152.8L723.0,137.1M723.0,145.2L723.0,137.1M723.0,137.1L737.4,137.7M737.4,137.7L737.4,129.5M737.4,137.7L751.9,122.0M751.9,130.1L751.9,122.0M751.9,122.0L766.3,122.5M766.3,122.5L766.3,114.4M774.0,126.3L601.0,217.2M601.0,217.2L673.6,143.9M673.6,143.9L729.3,141.7M729.3,141.7L774.0,118.2M774.0,126.3L774.0,118.2M601.0,217.2L601.0,217.2M601.0,217.2L615.4,202.7M615.4,209.7L615.4,202.7M615.4,202.7L629.9,202.1M629.9,202.1L629.9,188.1M629.9,202.1L644.3,173.5M644.3,194.5L644.3,173.5M644.3,173.5L658.7,186.9M658.7,186.9L658.7,159.0M658.7,186.9L673.1,144.4M673.1,179.4L673.1,144.4M673.1,144.4L687.5,171.8M687.5,171.8L687.5,143.4M687.5,171.8L701.9,142.8M701.9,164.2L701.9,142.8M701.9,142.8L716.3,156.6M716.3,156.6L716.3,142.2M716.3,156.6L730.7,140.9M730.7,149.1L730.7,140.9M730.7,140.9L745.2,141.5M745.2,141.5L745.2,133.4M745.2,141.5L759.6,125.8M759.6,133.9L759.6,125.8M759.6,125.8L774.0,126.3M774.0,126.3L774.0,118.2M781.7,130.1L608.7,221.1M608.7,221.1L681.3,147.7M681.3,147.7L737.0,145.5M737.0,145.5L781.7,122.0M781.7,130.1L781.7,122.0M608.7,221.1L608.7,221.1M608.7,221.1L623.2,206.5M623.2,213.5L623.2,206.5M623.2,206.5L637.6,205.9M637.6,205.9L637.6,191.9M637.6,205.9L652.0,177.4M652.0,198.3L652.0,177.4M652.0,177.4L666.4,190.8M666.4,190.8L666.4,162.8M666.4,190.8L680.8,148.2M680.8,183.2L680.8,148.2M680.8,148.2L695.2,175.6M695.2,175.6L695.2,147.2M695.2,175.6L709.6,146.6M709.6,168.0L709.6,146.6M709.6,146.6L724.0,160.4M724.0,160.4L724.0,146.0M724.0,160.4L738.5,144.7M738.5,152.9L738.5,144.7M738.5,144.7L752.9,145.3M752.9,145.3L752.9,137.2M752.9,145.3L767.3,129.6M767.3,137.7L767.3,129.6M767.3,129.6L781.7,130.1M781.7,130.1L781.7,122.0M789.4,134.0L616.5,224.9M616.5,224.9L689.0,151.6M689.0,151.6L744.7,149.3M744.7,149.3L789.4,125.8M789.4,134.0L789.4,125.8M616.5,224.9L616.5,224.9M616.5,224.9L630.9,210.3M630.9,217.3L630.9,210.3M630.9,210.3L645.3,209.7M645.3,209.7L645.3,195.7M645.3,209.7L659.7,181.2M659.7,202.1L659.7,181.2M659.7,181.2L674.1,194.6M674.1,194.6L674.1,166.6M674.1,194.6L688.5,152.0M688.5,187.0L688.5,152.0M688.5,152.0L702.9,179.4M702.9,179.4L702.9,151.0M702.9,179.4L717.4,150.4M717.4,171.8L717.4,150.4M717.4,150.4L731.8,164.3M731.8,164.3L731.8,149.9M731.8,164.3L746.2,148.6M746.2,156.7L746.2,148.6M746.2,148.6L760.6,149.1M760.6,149.1L760.6,141.0M760.6,149.1L775.0,133.4M775.0,141.5L775.0,133.4M775.0,133.4L789.4,134.0M789.4,134.0L789.4,125.8M797.1,137.8L624.2,228.7M624.2,228.7L696.7,155.4M696.7,155.4L752.4,153.2M752.4,153.2L797.1,129.6M797.1,137.8L797.1,129.6M624.2,228.7L624.2,228.7M624.2,228.7L638.6,214.1M638.6,221.1L638.6,214.1M638.6,214.1L653.0,213.5M653.0,213.5L653.0,199.6M653.0,213.5L667.4,185.0M667.4,206.0L667.4,185.0M667.4,185.0L681.8,198.4M681.8,198.4L681.8,170.4M681.8,198.4L696.2,155.8M696.2,190.8L696.2,155.8M696.2,155.8L710.7,183.2M710.7,183.2L710.7,154.8M710.7,183.2L725.1,154.3M725.1,175.7L725.1,154.3M725.1,154.3L739.5,168.1M739.5,168.1L739.5,153.7M739.5,168.1L753.9,152.4M753.9,160.5L753.9,152.4M753.9,152.4L768.3,152.9M768.3,152.9L768.3,144.8M768.3,152.9L782.7,137.2M782.7,145.3L782.7,137.2M782.7,137.2L797.1,137.8M797.1,137.8L797.1,129.6M804.8,141.6L631.9,232.5M631.9,232.5L704.4,159.2M704.4,159.2L760.1,157.0M760.1,157.0L804.8,133.5M804.8,141.6L804.8,133.5M631.9,232.5L631.9,232.5M631.9,232.5L646.3,217.9M646.3,224.9L646.3,217.9M646.3,217.9L660.7,217.3M660.7,217.3L660.7,203.4M660.7,217.3L675.1,188.8M675.1,209.8L675.1,188.8M675.1,188.8L689.5,202.2M689.5,202.2L689.5,174.2M689.5,202.2L704.0,159.7M704.0,194.6L704.0,159.7M704.0,159.7L718.4,187.0M718.4,187.0L718.4,158.7M718.4,187.0L732.8,158.1M732.8,179.5L732.8,158.1M732.8,158.1L747.2,171.9M747.2,171.9L747.2,157.5M747.2,171.9L761.6,156.2M761.6,164.3L761.6,156.2M761.6,156.2L776.0,156.7M776.0,156.7L776.0,148.6M776.0,156.7L790.4,141.0M790.4,149.2L790.4,141.0M790.4,141.0L804.8,141.6M804.8,141.6L804.8,133.5M784.7,160.1L639.6,236.3M639.6,236.3L712.1,163.0M712.1,163.0L767.9,160.8M767.9,160.8L784.7,151.9M784.7,160.1L784.7,151.9M639.6,236.3L639.6,236.3M639.6,236.3L651.7,224.1M651.7,230.0L651.7,224.1M651.7,224.1L663.8,223.6M663.8,223.6L663.8,211.9M663.8,223.6L675.9,199.7M675.9,217.3L675.9,199.7M675.9,199.7L688.0,210.9M688.0,210.9L688.0,187.4M688.0,210.9L700.1,175.2M700.1,204.5L700.1,175.2M700.1,175.2L712.1,198.2M712.1,198.2L712.1,163.0M712.1,198.2L724.2,162.5M724.2,191.8L724.2,162.5M724.2,162.5L736.3,185.5M736.3,185.5L736.3,162.1M736.3,185.5L748.4,161.6M748.4,179.1L748.4,161.6M748.4,161.6L760.5,172.8M760.5,172.8L760.5,161.1M760.5,172.8L772.6,158.3M772.6,166.4L772.6,158.3M772.6,158.3L784.7,160.1M784.7,160.1L784.7,151.9M792.4,163.9L647.3,240.1M647.3,240.1L719.9,166.8M719.9,166.8L775.6,164.6M775.6,164.6L792.4,155.8M792.4,163.9L792.4,155.8M647.3,240.1L647.3,240.1M647.3,240.1L659.4,227.9M659.4,233.8L659.4,227.9M659.4,227.9L671.5,227.4M671.5,227.4L671.5,215.7M671.5,227.4L683.6,203.5M683.6,221.1L683.6,203.5M683.6,203.5L695.7,214.7M695.7,214.7L695.7,191.3M695.7,214.7L707.8,179.0M707.8,208.4L707.8,179.0M707.8,179.0L719.9,202.0M719.9,202.0L719.9,166.8M719.9,202.0L731.9,166.4M731.9,195.6L731.9,166.4M731.9,166.4L744.0,189.3M744.0,189.3L744.0,165.9M744.0,189.3L756.1,165.4M756.1,182.9L756.1,165.4M756.1,165.4L768.2,176.6M768.2,176.6L768.2,164.9M768.2,176.6L780.3,162.1M780.3,170.2L780.3,162.1M780.3,162.1L792.4,163.9M792.4,163.9L792.4,155.8M800.1,167.7L655.0,243.9M655.0,243.9L727.6,170.6M727.6,170.6L783.3,168.4M783.3,168.4L800.1,159.6M800.1,167.7L800.1,159.6M655.0,243.9L655.0,243.9M655.0,243.9L667.1,231.7M667.1,237.6L667.1,231.7M667.1,231.7L679.2,231.2M679.2,231.2L679.2,219.5M679.2,231.2L691.3,207.3M691.3,224.9L691.3,207.3M691.3,207.3L703.4,218.5M703.4,218.5L703.4,195.1M703.4,218.5L715.5,182.8M715.5,212.2L715.5,182.8M715.5,182.8L727.6,205.8M727.6,205.8L727.6,170.6M727.6,205.8L739.7,170.2M739.7,199.5L739.7,170.2M739.7,170.2L751.8,193.1M751.8,193.1L751.8,169.7M751.8,193.1L763.8,169.2M763.8,186.8L763.8,169.2M763.8,169.2L775.9,180.4M775.9,180.4L775.9,168.7M775.9,180.4L788.0,165.9M788.0,174.0L788.0,165.9M788.0,165.9L800.1,167.7M800.1,167.7L800.1,159.6M807.8,171.5L662.8,247.8M662.8,247.8L735.3,174.4M735.3,174.4L791.0,172.2M791.0,172.2L807.8,163.4M807.8,171.5L807.8,163.4M662.8,247.8L662.8,247.8M662.8,247.8L674.9,235.5M674.9,241.4L674.9,235.5M674.9,235.5L686.9,235.0M686.9,235.0L686.9,223.3M686.9,235.0L699.0,211.1M699.0,228.7L699.0,211.1M699.0,211.1L711.1,222.3M711.1,222.3L711.1,198.9M711.1,222.3L723.2,186.7M723.2,216.0L723.2,186.7M723.2,186.7L735.3,209.6M735.3,209.6L735.3,174.4M735.3,209.6L747.4,174.0M747.4,203.3L747.4,174.0M747.4,174.0L759.5,196.9M759.5,196.9L759.5,173.5M759.5,196.9L771.6,173.0M771.6,190.6L771.6,173.0M771.6,173.0L783.6,184.2M783.6,184.2L783.6,172.5M783.6,184.2L795.7,169.7M795.7,177.9L795.7,169.7M795.7,169.7L807.8,171.5M807.8,171.5L807.8,163.4M815.5,175.3L670.5,251.6M670.5,251.6L743.0,178.3M743.0,178.3L798.7,176.0M798.7,176.0L815.5,167.2M815.5,175.3L815.5,167.2M670.5,251.6L670.5,251.6M670.5,251.6L682.6,239.4M682.6,245.2L682.6,239.4M682.6,239.4L694.7,238.9M694.7,238.9L694.7,227.1M694.7,238.9L706.7,214.9M706.7,232.5L706.7,214.9M706.7,214.9L718.8,226.2M718.8,226.2L718.8,202.7M718.8,226.2L730.9,190.5M730.9,219.8L730.9,190.5M730.9,190.5L743.0,213.4M743.0,213.4L743.0,178.3M743.0,213.4L755.1,177.8M755.1,207.1L755.1,177.8M755.1,177.8L767.2,200.7M767.2,200.7L767.2,177.3M767.2,200.7L779.3,176.8M779.3,194.4L779.3,176.8M779.3,176.8L791.4,188.0M791.4,188.0L791.4,176.3M791.4,188.0L803.4,173.6M803.4,181.7L803.4,173.6M803.4,173.6L815.5,175.3M815.5,175.3L815.5,167.2M823.3,179.1L678.2,255.4M678.2,255.4L750.7,182.1M750.7,182.1L806.4,179.9M806.4,179.9L823.3,171.0M823.3,179.1L823.3,171.0M678.2,255.4L678.2,255.4M678.2,255.4L690.3,243.2M690.3,249.0L690.3,243.2M690.3,243.2L702.4,242.7M702.4,242.7L702.4,230.9M702.4,242.7L714.5,218.7M714.5,236.3L714.5,218.7M714.5,218.7L726.6,230.0M726.6,230.0L726.6,206.5M726.6,230.0L738.6,194.3M738.6,223.6L738.6,194.3M738.6,194.3L750.7,217.3M750.7,217.3L750.7,182.1M750.7,217.3L762.8,181.6M762.8,210.9L762.8,181.6M762.8,181.6L774.9,204.5M774.9,204.5L774.9,181.1M774.9,204.5L787.0,180.6M787.0,198.2L787.0,180.6M787.0,180.6L799.1,191.8M799.1,191.8L799.1,180.1M799.1,191.8L811.2,177.4M811.2,185.5L811.2,177.4M811.2,177.4L823.3,179.1M823.3,179.1L823.3,171.0M831.0,182.9L685.9,259.2M685.9,259.2L758.4,185.9M758.4,185.9L814.2,183.7M814.2,183.7L831.0,174.8M831.0,182.9L831.0,174.8M685.9,259.2L685.9,259.2M685.9,259.2L698.0,247.0M698.0,252.8L698.0,247.0M698.0,247.0L710.1,246.5M710.1,246.5L710.1,234.8M710.1,246.5L722.2,222.5M722.2,240.1L722.2,222.5M722.2,222.5L734.3,233.8M734.3,233.8L734.3,210.3M734.3,233.8L746.4,198.1M746.4,227.4L746.4,198.1M746.4,198.1L758.4,221.1M758.4,221.1L758.4,185.9M758.4,221.1L770.5,185.4M770.5,214.7L770.5,185.4M770.5,185.4L782.6,208.4M782.6,208.4L782.6,184.9M782.6,208.4L794.7,184.5M794.7,202.0L794.7,184.5M794.7,184.5L806.8,195.7M806.8,195.7L806.8,184.0M806.8,195.7L818.9,181.2M818.9,189.3L818.9,181.2M818.9,181.2L831.0,182.9M831.0,182.9L831.0,174.8M838.7,186.8L693.6,263.0M693.6,263.0L766.2,189.7M766.2,189.7L821.9,187.5M821.9,187.5L838.7,178.6M838.7,186.8L838.7,178.6M693.6,263.0L693.6,263.0M693.6,263.0L705.7,250.8M705.7,256.7L705.7,250.8M705.7,250.8L717.8,250.3M717.8,250.3L717.8,238.6M717.8,250.3L729.9,226.4M729.9,244.0L729.9,226.4M729.9,226.4L742.0,237.6M742.0,237.6L742.0,214.1M742.0,237.6L754.1,201.9M754.1,231.2L754.1,201.9M754.1,201.9L766.2,224.9M766.2,224.9L766.2,189.7M766.2,224.9L778.2,189.2M778.2,218.5L778.2,189.2M778.2,189.2L790.3,212.2M790.3,212.2L790.3,188.8M790.3,212.2L802.4,188.3M802.4,205.8L802.4,188.3M802.4,188.3L814.5,199.5M814.5,199.5L814.5,187.8M814.5,199.5L826.6,185.0M826.6,193.1L826.6,185.0M826.6,185.0L838.7,186.8M838.7,186.8L838.7,178.6M846.4,190.6L701.4,266.8M701.4,266.8L773.9,193.5M773.9,193.5L829.6,191.3M829.6,191.3L846.4,182.5M846.4,190.6L846.4,182.5M701.4,266.8L701.4,266.8M701.4,266.8L713.4,254.6M713.4,260.5L713.4,254.6M713.4,254.6L725.5,254.1M725.5,254.1L725.5,242.4M725.5,254.1L737.6,230.2M737.6,247.8L737.6,230.2M737.6,230.2L749.7,241.4M749.7,241.4L749.7,218.0M749.7,241.4L761.8,205.7M761.8,235.1L761.8,205.7M761.8,205.7L773.9,228.7M773.9,228.7L773.9,193.5M773.9,228.7L786.0,193.1M786.0,222.3L786.0,193.1M786.0,193.1L798.1,216.0M798.1,216.0L798.1,192.6M798.1,216.0L810.1,192.1M810.1,209.6L810.1,192.1M810.1,192.1L822.2,203.3M822.2,203.3L822.2,191.6M822.2,203.3L834.3,188.8M834.3,196.9L834.3,188.8M834.3,188.8L846.4,190.6M846.4,190.6L846.4,182.5M854.1,194.4L709.1,270.6M709.1,270.6L781.6,197.3M781.6,197.3L837.3,195.1M837.3,195.1L854.1,186.3M854.1,194.4L854.1,186.3M709.1,270.6L709.1,270.6M709.1,270.6L721.2,258.4M721.2,264.3L721.2,258.4M721.2,258.4L733.2,257.9M733.2,257.9L733.2,246.2M733.2,257.9L745.3,234.0M745.3,251.6L745.3,234.0M745.3,234.0L757.4,245.2M757.4,245.2L757.4,221.8M757.4,245.2L769.5,209.5M769.5,238.9L769.5,209.5M769.5,209.5L781.6,232.5M781.6,232.5L781.6,197.3M781.6,232.5L793.7,196.9M793.7,226.2L793.7,196.9M793.7,196.9L805.8,219.8M805.8,219.8L805.8,196.4M805.8,219.8L817.9,195.9M817.9,213.5L817.9,195.9M817.9,195.9L829.9,207.1M829.9,207.1L829.9,195.4M829.9,207.1L842.0,192.6M842.0,200.7L842.0,192.6M842.0,192.6L854.1,194.4M854.1,194.4L854.1,186.3M861.8,198.2L716.8,274.5M716.8,274.5L789.3,201.1M789.3,201.1L845.0,198.9M845.0,198.9L861.8,190.1M861.8,198.2L861.8,190.1M716.8,274.5L716.8,274.5M716.8,274.5L728.9,262.2M728.9,268.1L728.9,262.2M728.9,262.2L741.0,261.7M741.0,261.7L741.0,250.0M741.0,261.7L753.0,237.8M753.0,255.4L753.0,237.8M753.0,237.8L765.1,249.0M765.1,249.0L765.1,225.6M765.1,249.0L777.2,213.4M777.2,242.7L777.2,213.4M777.2,213.4L789.3,236.3M789.3,236.3L789.3,201.1M789.3,236.3L801.4,200.7M801.4,230.0L801.4,200.7M801.4,200.7L813.5,223.6M813.5,223.6L813.5,200.2M813.5,223.6L825.6,199.7M825.6,217.3L825.6,199.7M825.6,199.7L837.7,210.9M837.7,210.9L837.7,199.2M837.7,210.9L849.8,196.4M849.8,204.6L849.8,196.4M849.8,196.4L861.8,198.2M861.8,198.2L861.8,190.1M869.6,202.0L724.5,278.3M724.5,278.3L797.0,205.0M797.0,205.0L852.7,202.7M852.7,202.7L869.6,193.9M869.6,202.0L869.6,193.9M724.5,278.3L724.5,278.3M724.5,278.3L736.6,266.1M736.6,271.9L736.6,266.1M736.6,266.1L748.7,265.6M748.7,265.6L748.7,253.8M748.7,265.6L760.8,241.6M760.8,259.2L760.8,241.6M760.8,241.6L772.9,252.9M772.9,252.9L772.9,229.4M772.9,252.9L784.9,217.2M784.9,246.5L784.9,217.2M784.9,217.2L797.0,240.1M797.0,240.1L797.0,205.0M797.0,240.1L809.1,204.5M809.1,233.8L809.1,204.5M809.1,204.5L821.2,227.4M821.2,227.4L821.2,204.0M821.2,227.4L833.3,203.5M833.3,221.1L833.3,203.5M833.3,203.5L845.4,214.7M845.4,214.7L845.4,203.0M845.4,214.7L857.5,200.2M857.5,208.4L857.5,200.2M857.5,200.2L869.6,202.0M869.6,202.0L869.6,193.9M877.3,205.8L732.2,282.1M732.2,282.1L804.7,208.8M804.7,208.8L860.5,206.5M860.5,206.5L877.3,197.7M877.3,205.8L877.3,197.7M732.2,282.1L732.2,282.1M732.2,282.1L744.3,269.9M744.3,275.7L744.3,269.9M744.3,269.9L756.4,269.4M756.4,269.4L756.4,257.6M756.4,269.4L768.5,245.4M768.5,263.0L768.5,245.4M768.5,245.4L780.6,256.7M780.6,256.7L780.6,233.2M780.6,256.7L792.7,221.0M792.7,250.3L792.7,221.0M792.7,221.0L804.7,244.0M804.7,244.0L804.7,208.8M804.7,244.0L816.8,208.3M816.8,237.6L816.8,208.3M816.8,208.3L828.9,231.2M828.9,231.2L828.9,207.8M828.9,231.2L841.0,207.3M841.0,224.9L841.0,207.3M841.0,207.3L853.1,218.5M853.1,218.5L853.1,206.8M853.1,218.5L865.2,204.1M865.2,212.2L865.2,204.1M865.2,204.1L877.3,205.8M877.3,205.8L877.3,197.7M885.0,209.6L739.9,285.9M739.9,285.9L812.5,212.6M812.5,212.6L868.2,210.4M868.2,210.4L885.0,201.5M885.0,209.6L885.0,201.5M739.9,285.9L739.9,285.9M739.9,285.9L752.0,273.7M752.0,279.5L752.0,273.7M752.0,273.7L764.1,273.2M764.1,273.2L764.1,261.5M764.1,273.2L776.2,249.2M776.2,266.8L776.2,249.2M776.2,249.2L788.3,260.5M788.3,260.5L788.3,237.0M788.3,260.5L800.4,224.8M800.4,254.1L800.4,224.8M800.4,224.8L812.5,247.8M812.5,247.8L812.5,212.6M812.5,247.8L824.5,212.1M824.5,241.4L824.5,212.1M824.5,212.1L836.6,235.1M836.6,235.1L836.6,211.6M836.6,235.1L848.7,211.2M848.7,228.7L848.7,211.2M848.7,211.2L860.8,222.4M860.8,222.4L860.8,210.7M860.8,222.4L872.9,207.9M872.9,216.0L872.9,207.9M872.9,207.9L885.0,209.6M885.0,209.6L885.0,201.5M892.7,213.5L747.7,289.7M747.7,289.7L820.2,216.4M820.2,216.4L875.9,214.2M875.9,214.2L892.7,205.3M892.7,213.5L892.7,205.3M747.7,289.7L747.7,289.7M747.7,289.7L759.7,277.5M759.7,283.4L759.7,277.5M759.7,277.5L771.8,277.0M771.8,277.0L771.8,265.3M771.8,277.0L783.9,253.1M783.9,270.6L783.9,253.1M783.9,253.1L796.0,264.3M796.0,264.3L796.0,240.8M796.0,264.3L808.1,228.6M808.1,257.9L808.1,228.6M808.1,228.6L820.2,251.6M820.2,251.6L820.2,216.4M820.2,251.6L832.3,215.9M832.3,245.2L832.3,215.9M832.3,215.9L844.4,238.9M844.4,238.9L844.4,215.5M844.4,238.9L856.4,215.0M856.4,232.5L856.4,215.0M856.4,215.0L868.5,226.2M868.5,226.2L868.5,214.5M868.5,226.2L880.6,211.7M880.6,219.8L880.6,211.7M880.6,211.7L892.7,213.5M892.7,213.5L892.7,205.3M900.4,217.3L755.4,293.5M755.4,293.5L827.9,220.2M827.9,220.2L883.6,218.0M883.6,218.0L900.4,209.2M900.4,217.3L900.4,209.2M755.4,293.5L755.4,293.5M755.4,293.5L767.5,281.3M767.5,287.2L767.5,281.3M767.5,281.3L779.5,280.8M779.5,280.8L779.5,269.1M779.5,280.8L791.6,256.9M791.6,274.5L791.6,256.9M791.6,256.9L803.7,268.1M803.7,268.1L803.7,244.7M803.7,268.1L815.8,232.4M815.8,261.8L815.8,232.4M815.8,232.4L827.9,255.4M827.9,255.4L827.9,220.2M827.9,255.4L840.0,219.8M840.0,249.0L840.0,219.8M840.0,219.8L852.1,242.7M852.1,242.7L852.1,219.3M852.1,242.7L864.2,218.8M864.2,236.3L864.2,218.8M864.2,218.8L876.2,230.0M876.2,230.0L876.2,218.3M876.2,230.0L888.3,215.5M888.3,223.6L888.3,215.5M888.3,215.5L900.4,217.3M900.4,217.3L900.4,209.2M908.1,221.1L763.1,297.3M763.1,297.3L835.6,224.0M835.6,224.0L891.3,221.8M891.3,221.8L908.1,213.0M908.1,221.1L908.1,213.0M763.1,297.3L763.1,297.3M763.1,297.3L775.2,285.1M775.2,291.0L775.2,285.1M775.2,285.1L787.3,284.6M787.3,284.6L787.3,272.9M787.3,284.6L799.3,260.7M799.3,278.3L799.3,260.7M799.3,260.7L811.4,271.9M811.4,271.9L811.4,248.5M811.4,271.9L823.5,236.2M823.5,265.6L823.5,236.2M823.5,236.2L835.6,259.2M835.6,259.2L835.6,224.0M835.6,259.2L847.7,223.6M847.7,252.9L847.7,223.6M847.7,223.6L859.8,246.5M859.8,246.5L859.8,223.1M859.8,246.5L871.9,222.6M871.9,240.1L871.9,222.6M871.9,222.6L884.0,233.8M884.0,233.8L884.0,222.1M884.0,233.8L896.1,219.3M896.1,227.4L896.1,219.3M896.1,219.3L908.1,221.1M908.1,221.1L908.1,213.0M907.6,220.8L762.6,297.1M762.6,297.1L835.1,223.8M835.1,223.8L890.8,221.6M890.8,221.6L907.6,212.7M907.6,220.8L907.6,212.7M762.6,297.1L762.6,297.1M762.6,297.1L774.7,284.9M774.7,290.7L774.7,284.9M774.7,284.9L786.8,284.4M786.8,284.4L786.8,272.7M786.8,284.4L798.8,260.4M798.8,278.0L798.8,260.4M798.8,260.4L810.9,271.7M810.9,271.7L810.9,248.2M810.9,271.7L823.0,236.0M823.0,265.3L823.0,236.0M823.0,236.0L835.1,259.0M835.1,259.0L835.1,223.8M835.1,259.0L847.2,223.3M847.2,252.6L847.2,223.3M847.2,223.3L859.3,246.3M859.3,246.3L859.3,222.8M859.3,246.3L871.4,222.3M871.4,239.9L871.4,222.3M871.4,222.3L883.5,233.5M883.5,233.5L883.5,221.9M883.5,233.5L895.5,219.1M895.5,227.2L895.5,219.1M895.5,219.1L907.6,220.8M907.6,220.8L907.6,212.7M572.1,202.9L762.6,297.1M717.1,126.7L907.6,220.8M717.1,118.5L907.6,212.7M644.6,129.6L835.1,223.8M669.3,128.6L859.8,222.8M619.9,154.6L810.4,248.8M695.6,127.5L886.1,221.7M596.0,178.8L786.5,272.9" stroke="#7e7e7e" stroke-width="1.5" fill="none"/>
<path d="M900.4,220.5Q884.4,219.5 866.4,230.5M900.4,223.5L866.4,244.5M894.7,220.5L894.7,229.5M894.7,220.5L900.4,229.5M889.1,221.2L889.1,230.2M889.1,221.2L894.8,230.2M883.4,222.5L883.4,231.5M883.4,222.5L889.1,231.5M877.7,224.5L877.7,233.5M877.7,224.5L883.4,233.5M872.1,227.2L872.1,236.2M872.1,227.2L877.8,236.2M909.0,225.0Q893.0,224.0 875.0,235.0M909.0,228.0L875.0,249.0M903.3,225.0L903.3,234.0M903.3,225.0L909.0,234.0M897.7,225.7L897.7,234.7M897.7,225.7L903.4,234.7M892.0,227.0L892.0,236.0M892.0,227.0L897.7,236.0M886.3,229.0L886.3,238.0M886.3,229.0L892.0,238.0M880.7,231.7L880.7,240.7M880.7,231.7L886.4,240.7M917.6,229.5Q901.6,228.5 883.6,239.5M917.6,232.5L883.6,253.5M911.9,229.5L911.9,238.5M911.9,229.5L917.6,238.5M906.3,230.2L906.3,239.2M906.3,230.2L912.0,239.2M900.6,231.5L900.6,240.5M900.6,231.5L906.3,240.5M894.9,233.5L894.9,242.5M894.9,233.5L900.6,242.5M889.3,236.2L889.3,245.2M889.3,236.2L895.0,245.2M926.2,234.0Q910.2,233.0 892.2,244.0M926.2,237.0L892.2,258.0M920.5,234.0L920.5,243.0M920.5,234.0L926.2,243.0M914.9,234.7L914.9,243.7M914.9,234.7L920.6,243.7M909.2,236.0L909.2,245.0M909.2,236.0L914.9,245.0M903.5,238.0L903.5,247.0M903.5,238.0L909.2,247.0M897.9,240.7L897.9,249.7M897.9,240.7L903.6,249.7M934.8,238.5Q918.8,237.5 900.8,248.5M934.8,241.5L900.8,262.5M929.1,238.5L929.1,247.5M929.1,238.5L934.8,247.5M923.5,239.2L923.5,248.2M923.5,239.2L929.2,248.2M917.8,240.5L917.8,249.5M917.8,240.5L923.5,249.5M912.1,242.5L912.1,251.5M912.1,242.5L917.8,251.5M906.5,245.2L906.5,254.2M906.5,245.2L912.2,254.2M943.4,243.0Q927.4,242.0 909.4,253.0M943.4,246.0L909.4,267.0M937.7,243.0L937.7,252.0M937.7,243.0L943.4,252.0M932.1,243.7L932.1,252.7M932.1,243.7L937.8,252.7M926.4,245.0L926.4,254.0M926.4,245.0L932.1,254.0M920.7,247.0L920.7,256.0M920.7,247.0L926.4,256.0M915.1,249.7L915.1,258.7M915.1,249.7L920.8,258.7M952.0,247.5Q936.0,246.5 918.0,257.5M952.0,250.5L918.0,271.5M946.3,247.5L946.3,256.5M946.3,247.5L952.0,256.5M940.7,248.2L940.7,257.2M940.7,248.2L946.4,257.2M935.0,249.5L935.0,258.5M935.0,249.5L940.7,258.5M929.3,251.5L929.3,260.5M929.3,251.5L935.0,260.5M923.7,254.2L923.7,263.2M923.7,254.2L929.4,263.2M960.6,252.0Q944.6,251.0 926.6,262.0M960.6,255.0L926.6,276.0M954.9,252.0L954.9,261.0M954.9,252.0L960.6,261.0M949.3,252.7L949.3,261.7M949.3,252.7L955.0,261.7M943.6,254.0L943.6,263.0M943.6,254.0L949.3,263.0M937.9,256.0L937.9,265.0M937.9,256.0L943.6,265.0M932.3,258.7L932.3,267.7M932.3,258.7L938.0,267.7" stroke="#7e7e7e" stroke-width="1.4" fill="none"/>
<path d="M930.0,130.0L1080.0,-5.0M930.0,137.5L1080.0,2.5M930.0,145.0L1080.0,10.0M930.0,152.5L1080.0,17.5M930.0,160.0L1080.0,25.0M930.0,167.5L1080.0,32.5M930.0,175.0L1080.0,40.0M930.0,182.5L1080.0,47.5M930.0,190.0L1080.0,55.0M930.0,197.5L1080.0,62.5M930.0,205.0L1080.0,70.0M930.0,212.5L1080.0,77.5M930.0,220.0L1080.0,85.0M930.0,227.5L1080.0,92.5M930.0,235.0L1080.0,100.0M930.0,242.5L1080.0,107.5M930.0,250.0L1080.0,115.0M930.0,257.5L1080.0,122.5M930.0,265.0L1080.0,130.0M930.0,272.5L1080.0,137.5M930.0,280.0L1080.0,145.0M930.0,287.5L1080.0,152.5M930.0,295.0L1080.0,160.0M930.0,302.5L1080.0,167.5M930.0,310.0L1080.0,175.0M930.0,317.5L1080.0,182.5M930.0,325.0L1080.0,190.0M930.0,332.5L1080.0,197.5M930.0,340.0L1080.0,205.0M930.0,347.5L1080.0,212.5M930.0,355.0L1080.0,220.0M930.0,362.5L1080.0,227.5M930.0,370.0L1080.0,235.0M930.0,377.5L1080.0,242.5M930.0,385.0L1080.0,250.0M930.0,392.5L1080.0,257.5M930.0,400.0L1080.0,265.0M930.0,407.5L1080.0,272.5M930.0,415.0L1080.0,280.0M930.0,422.5L1080.0,287.5M930.0,430.0L1080.0,295.0M930.0,437.5L1080.0,302.5M930.0,445.0L1080.0,310.0M930.0,452.5L1080.0,317.5M930.0,460.0L1080.0,325.0M930.0,467.5L1080.0,332.5M930.0,475.0L1080.0,340.0M930.0,482.5L1080.0,347.5M930.0,490.0L1080.0,355.0M930.0,497.5L1080.0,362.5M930.0,505.0L1080.0,370.0M930.0,512.5L1080.0,377.5M930.0,520.0L1080.0,385.0M930.0,527.5L1080.0,392.5M930.0,535.0L1080.0,400.0M930.0,542.5L1080.0,407.5M930.0,550.0L1080.0,415.0M930.0,557.5L1080.0,422.5M930.0,565.0L1080.0,430.0M930.0,572.5L1080.0,437.5M930.0,580.0L1080.0,445.0M930.0,587.5L1080.0,452.5M930.0,595.0L1080.0,460.0M930.0,602.5L1080.0,467.5M930.0,610.0L1080.0,475.0M930.0,617.5L1080.0,482.5M930.0,625.0L1080.0,490.0M930.0,133.0L1080.0,211.0M930.0,141.0L1080.0,219.0M930.0,149.0L1080.0,227.0M930.0,157.0L1080.0,235.0M930.0,165.0L1080.0,243.0M930.0,173.0L1080.0,251.0M930.0,181.0L1080.0,259.0M930.0,189.0L1080.0,267.0M930.0,197.0L1080.0,275.0M930.0,205.0L1080.0,283.0M930.0,213.0L1080.0,291.0M930.0,221.0L1080.0,299.0M930.0,229.0L1080.0,307.0M930.0,237.0L1080.0,315.0M930.0,245.0L1080.0,323.0M930.0,253.0L1080.0,331.0M930.0,261.0L1080.0,339.0M930.0,269.0L1080.0,347.0M930.0,277.0L1080.0,355.0M930.0,285.0L1080.0,363.0M930.0,293.0L1080.0,371.0M930.0,301.0L1080.0,379.0M930.0,309.0L1080.0,387.0M930.0,317.0L1080.0,395.0M930.0,325.0L1080.0,403.0M930.0,333.0L1080.0,411.0M930.0,341.0L1080.0,419.0M930.0,349.0L1080.0,427.0M930.0,357.0L1080.0,435.0M930.0,365.0L1080.0,443.0M930.0,373.0L1080.0,451.0M930.0,381.0L1080.0,459.0M930.0,389.0L1080.0,467.0M930.0,397.0L1080.0,475.0M930.0,405.0L1080.0,483.0M930.0,413.0L1080.0,491.0M980.0,285L980.0,340M985.5,285L985.5,340M991.0,285L991.0,340M996.5,285L996.5,340M1002.0,285L1002.0,340M1007.5,285L1007.5,340M1013.0,285L1013.0,340M1018.5,285L1018.5,340M1024.0,285L1024.0,340M1029.5,285L1029.5,340" stroke="#7e7e7e" stroke-width="1.3" fill="none"/>
</g>
<polyline points="572,203 645,129 745,112" fill="none" stroke="#1f8a1f" stroke-width="1"/>
<polyline points="745,112 809,144.5" fill="none" stroke="#a020a0" stroke-width="1"/>
<polyline points="786,151.5 908.5,213.5" fill="none" stroke="#1f8a1f" stroke-width="1"/>
<polyline points="572,203 648,245" fill="none" stroke="#1ea81e" stroke-width="1"/>
<polyline points="909,225 949,246" fill="none" stroke="#1f8a1f" stroke-width="1"/>
<polyline points="985,289 1023,309 985,333" fill="none" stroke="#1f8a1f" stroke-width="1"/>
<g clip-path="url(#c1)"><line x1="573.6" y1="202.1" x2="764.2" y2="296.3" stroke="#4a8aa8" stroke-width="2.6" stroke-dasharray="1.2 1"/></g>
<g clip-path="url(#c1)"><line x1="714.7" y1="119.8" x2="905.2" y2="214.0" stroke="#4a8aa8" stroke-width="2" stroke-dasharray="4 4"/></g>
<path d="M650.1,168.3 L653.1,164.5 L654.6,164.8 L651.6,168.6 Z" fill="#3a7a98"/>
<path d="M607.1,185.3 L610.6,181.8 L612.1,182.3 L608.6,185.8 Z" fill="#3f7f9f"/>
<path d="M657.8,172.1 L660.8,168.3 L662.3,168.6 L659.3,172.4 Z" fill="#3a7a98"/>
<path d="M614.8,189.1 L618.3,185.6 L619.8,186.1 L616.3,189.6 Z" fill="#3f7f9f"/>
<path d="M665.5,175.9 L668.5,172.1 L670.0,172.4 L667.0,176.2 Z" fill="#3a7a98"/>
<path d="M622.5,192.9 L626.0,189.4 L627.5,189.9 L624.0,193.4 Z" fill="#3f7f9f"/>
<path d="M673.3,179.7 L676.3,175.9 L677.8,176.2 L674.8,180.0 Z" fill="#3a7a98"/>
<path d="M630.3,196.7 L633.8,193.2 L635.3,193.7 L631.8,197.2 Z" fill="#3f7f9f"/>
<path d="M681.0,183.6 L684.0,179.8 L685.5,180.1 L682.5,183.9 Z" fill="#3a7a98"/>
<path d="M638.0,200.5 L641.5,197.0 L643.0,197.5 L639.5,201.0 Z" fill="#3f7f9f"/>
<path d="M688.7,187.4 L691.7,183.6 L693.2,183.9 L690.2,187.7 Z" fill="#3a7a98"/>
<path d="M645.7,204.3 L649.2,200.8 L650.7,201.3 L647.2,204.8 Z" fill="#3f7f9f"/>
<path d="M696.4,191.2 L699.4,187.4 L700.9,187.7 L697.9,191.5 Z" fill="#3a7a98"/>
<path d="M653.4,208.1 L656.9,204.6 L658.4,205.1 L654.9,208.6 Z" fill="#3f7f9f"/>
<path d="M704.1,195.0 L707.1,191.2 L708.6,191.5 L705.6,195.3 Z" fill="#3a7a98"/>
<path d="M661.1,211.9 L664.6,208.4 L666.1,208.9 L662.6,212.4 Z" fill="#3f7f9f"/>
<path d="M711.8,198.8 L714.8,195.0 L716.3,195.3 L713.3,199.1 Z" fill="#3a7a98"/>
<path d="M668.8,215.8 L672.3,212.3 L673.8,212.8 L670.3,216.3 Z" fill="#3f7f9f"/>
<path d="M719.6,202.6 L722.6,198.8 L724.1,199.1 L721.1,202.9 Z" fill="#3a7a98"/>
<path d="M676.6,219.6 L680.1,216.1 L681.6,216.6 L678.1,220.1 Z" fill="#3f7f9f"/>
<path d="M727.3,206.4 L730.3,202.6 L731.8,202.9 L728.8,206.7 Z" fill="#3a7a98"/>
<path d="M684.3,223.4 L687.8,219.9 L689.3,220.4 L685.8,223.9 Z" fill="#3f7f9f"/>
<path d="M735.0,210.3 L738.0,206.5 L739.5,206.8 L736.5,210.6 Z" fill="#3a7a98"/>
<path d="M692.0,227.2 L695.5,223.7 L697.0,224.2 L693.5,227.7 Z" fill="#3f7f9f"/>
<path d="M742.7,214.1 L745.7,210.3 L747.2,210.6 L744.2,214.4 Z" fill="#3a7a98"/>
<path d="M699.7,231.0 L703.2,227.5 L704.7,228.0 L701.2,231.5 Z" fill="#3f7f9f"/>
<path d="M750.4,217.9 L753.4,214.1 L754.9,214.4 L751.9,218.2 Z" fill="#3a7a98"/>
<path d="M707.4,234.8 L710.9,231.3 L712.4,231.8 L708.9,235.3 Z" fill="#3f7f9f"/>
<path d="M758.1,221.7 L761.1,217.9 L762.6,218.2 L759.6,222.0 Z" fill="#3a7a98"/>
<path d="M715.1,238.6 L718.6,235.1 L720.1,235.6 L716.6,239.1 Z" fill="#3f7f9f"/>
<path d="M765.9,225.5 L768.9,221.7 L770.4,222.0 L767.4,225.8 Z" fill="#3a7a98"/>
<path d="M722.9,242.5 L726.4,239.0 L727.9,239.5 L724.4,243.0 Z" fill="#3f7f9f"/>
<path d="M773.6,229.3 L776.6,225.5 L778.1,225.8 L775.1,229.6 Z" fill="#3a7a98"/>
<path d="M730.6,246.3 L734.1,242.8 L735.6,243.3 L732.1,246.8 Z" fill="#3f7f9f"/>
<path d="M781.3,233.1 L784.3,229.3 L785.8,229.6 L782.8,233.4 Z" fill="#3a7a98"/>
<path d="M738.3,250.1 L741.8,246.6 L743.3,247.1 L739.8,250.6 Z" fill="#3f7f9f"/>
<path d="M789.0,237.0 L792.0,233.2 L793.5,233.5 L790.5,237.3 Z" fill="#3a7a98"/>
<path d="M746.0,253.9 L749.5,250.4 L751.0,250.9 L747.5,254.4 Z" fill="#3f7f9f"/>
<path d="M796.7,240.8 L799.7,237.0 L801.2,237.3 L798.2,241.1 Z" fill="#3a7a98"/>
<path d="M753.7,257.7 L757.2,254.2 L758.7,254.7 L755.2,258.2 Z" fill="#3f7f9f"/>
<path d="M804.4,244.6 L807.4,240.8 L808.9,241.1 L805.9,244.9 Z" fill="#3a7a98"/>
<path d="M761.4,261.5 L764.9,258.0 L766.4,258.5 L762.9,262.0 Z" fill="#3f7f9f"/>
<path d="M812.2,248.4 L815.2,244.6 L816.7,244.9 L813.7,248.7 Z" fill="#3a7a98"/>
<path d="M769.2,265.3 L772.7,261.8 L774.2,262.3 L770.7,265.8 Z" fill="#3f7f9f"/>
<path d="M819.9,252.2 L822.9,248.4 L824.4,248.7 L821.4,252.5 Z" fill="#3a7a98"/>
<path d="M776.9,269.2 L780.4,265.7 L781.9,266.2 L778.4,269.7 Z" fill="#3f7f9f"/>
<path d="M827.6,256.0 L830.6,252.2 L832.1,252.5 L829.1,256.3 Z" fill="#3a7a98"/>
<path d="M784.6,273.0 L788.1,269.5 L789.6,270.0 L786.1,273.5 Z" fill="#3f7f9f"/>
<path d="M835.3,259.8 L838.3,256.0 L839.8,256.3 L836.8,260.1 Z" fill="#3a7a98"/>
<path d="M792.3,276.8 L795.8,273.3 L797.3,273.8 L793.8,277.3 Z" fill="#3f7f9f"/>
<line x1="907.5" y1="215.5" x2="857" y2="247" stroke="#4a8aa8" stroke-width="2.4" stroke-dasharray="1.2 1"/>
<line x1="876" y1="246" x2="876.5" y2="233" stroke="#7e7e7e" stroke-width="1.3"/>
<path d="M877,234 Q893,226 909,225" stroke="#7e7e7e" stroke-width="1.4" fill="none"/>
<rect x="892" y="233" width="3.5" height="2" fill="#f08c1c"/><rect x="900" y="237.5" width="3.5" height="2" fill="#f08c1c"/>
<rect x="907" y="241" width="3.5" height="2" fill="#f0f0f0"/><rect x="919" y="243.5" width="3.5" height="2" fill="#f0f0f0"/>
<line x1="880" y1="232" x2="900" y2="246" stroke="#1ea81e" stroke-width="0.8"/>
<ellipse cx="676.6" cy="130.9" rx="1.9" ry="1.15" fill="#e08a20"/>
<ellipse cx="651.1" cy="163.1" rx="1.9" ry="1.15" fill="#e08a20"/>
<ellipse cx="684.3" cy="134.7" rx="1.9" ry="1.15" fill="#e08a20"/>
<ellipse cx="658.8" cy="166.9" rx="1.9" ry="1.15" fill="#e08a20"/>
<ellipse cx="692.0" cy="138.5" rx="1.9" ry="1.15" fill="#e08a20"/>
<ellipse cx="666.5" cy="170.7" rx="1.9" ry="1.15" fill="#e08a20"/>
<ellipse cx="699.8" cy="142.3" rx="1.9" ry="1.15" fill="#e08a20"/>
<ellipse cx="674.3" cy="174.5" rx="1.9" ry="1.15" fill="#e08a20"/>
<ellipse cx="707.5" cy="146.2" rx="1.9" ry="1.15" fill="#e08a20"/>
<ellipse cx="682.0" cy="178.4" rx="1.9" ry="1.15" fill="#e08a20"/>
<ellipse cx="715.2" cy="150.0" rx="1.9" ry="1.15" fill="#e08a20"/>
<ellipse cx="689.7" cy="182.2" rx="1.9" ry="1.15" fill="#e08a20"/>
<ellipse cx="722.9" cy="153.8" rx="1.9" ry="1.15" fill="#e08a20"/>
<ellipse cx="697.4" cy="186.0" rx="1.9" ry="1.15" fill="#e08a20"/>
<ellipse cx="730.6" cy="157.6" rx="1.9" ry="1.15" fill="#e08a20"/>
<ellipse cx="705.1" cy="189.8" rx="1.9" ry="1.15" fill="#e08a20"/>
<ellipse cx="738.3" cy="161.4" rx="1.9" ry="1.15" fill="#e08a20"/>
<ellipse cx="712.8" cy="193.6" rx="1.9" ry="1.15" fill="#e08a20"/>
<ellipse cx="746.1" cy="165.2" rx="1.9" ry="1.15" fill="#e08a20"/>
<ellipse cx="720.6" cy="197.4" rx="1.9" ry="1.15" fill="#e08a20"/>
<ellipse cx="753.8" cy="169.0" rx="1.9" ry="1.15" fill="#e08a20"/>
<ellipse cx="728.3" cy="201.2" rx="1.9" ry="1.15" fill="#e08a20"/>
<ellipse cx="761.5" cy="172.9" rx="1.9" ry="1.15" fill="#e08a20"/>
<ellipse cx="736.0" cy="205.1" rx="1.9" ry="1.15" fill="#e08a20"/>
<ellipse cx="769.2" cy="176.7" rx="1.9" ry="1.15" fill="#e08a20"/>
<ellipse cx="743.7" cy="208.9" rx="1.9" ry="1.15" fill="#e08a20"/>
<ellipse cx="776.9" cy="180.5" rx="1.9" ry="1.15" fill="#e08a20"/>
<ellipse cx="751.4" cy="212.7" rx="1.9" ry="1.15" fill="#e08a20"/>
<ellipse cx="784.7" cy="184.3" rx="1.9" ry="1.15" fill="#e08a20"/>
<ellipse cx="759.1" cy="216.5" rx="1.9" ry="1.15" fill="#e08a20"/>
<ellipse cx="792.4" cy="188.1" rx="1.9" ry="1.15" fill="#e08a20"/>
<ellipse cx="766.9" cy="220.3" rx="1.9" ry="1.15" fill="#e08a20"/>
<ellipse cx="800.1" cy="191.9" rx="1.9" ry="1.15" fill="#e08a20"/>
<ellipse cx="774.6" cy="224.1" rx="1.9" ry="1.15" fill="#e08a20"/>
<ellipse cx="807.8" cy="195.7" rx="1.9" ry="1.15" fill="#e08a20"/>
<ellipse cx="782.3" cy="227.9" rx="1.9" ry="1.15" fill="#e08a20"/>
<ellipse cx="815.5" cy="199.6" rx="1.9" ry="1.15" fill="#e08a20"/>
<ellipse cx="790.0" cy="231.8" rx="1.9" ry="1.15" fill="#e08a20"/>
<ellipse cx="823.2" cy="203.4" rx="1.9" ry="1.15" fill="#e08a20"/>
<ellipse cx="797.7" cy="235.6" rx="1.9" ry="1.15" fill="#e08a20"/>
<ellipse cx="831.0" cy="207.2" rx="1.9" ry="1.15" fill="#e08a20"/>
<ellipse cx="805.4" cy="239.4" rx="1.9" ry="1.15" fill="#e08a20"/>
<ellipse cx="838.7" cy="211.0" rx="1.9" ry="1.15" fill="#e08a20"/>
<ellipse cx="813.2" cy="243.2" rx="1.9" ry="1.15" fill="#e08a20"/>
<ellipse cx="846.4" cy="214.8" rx="1.9" ry="1.15" fill="#e08a20"/>
<ellipse cx="820.9" cy="247.0" rx="1.9" ry="1.15" fill="#e08a20"/>
<ellipse cx="854.1" cy="218.6" rx="1.9" ry="1.15" fill="#e08a20"/>
<ellipse cx="828.6" cy="250.8" rx="1.9" ry="1.15" fill="#e08a20"/>
<ellipse cx="861.8" cy="222.4" rx="1.9" ry="1.15" fill="#e08a20"/>
<ellipse cx="836.3" cy="254.6" rx="1.9" ry="1.15" fill="#e08a20"/>
<rect x="393.00" y="246.00" width="592.00" height="240.00" fill="#ffffff"/>
<rect x="393.00" y="246.00" width="1.00" height="240.00" fill="#9a9a9a"/>
<rect x="394.00" y="246.00" width="1.00" height="240.00" fill="#d8d8d8"/>
<g><path d="M398.5,255.5 L402.5,249.5 L404.5,252 L406,255.5 Z" fill="#20b0b0"/><path d="M399,250 L403,250 M400,251.5 L405,251.5" stroke="#333" stroke-width="0.8"/><path d="M398,256 L406,256" stroke="#108080" stroke-width="1"/></g>
<text x="408.40" y="256.20" font-size="7.3" fill="#1a1a1a" text-anchor="start" textLength="149" lengthAdjust="spacingAndGlyphs">Aegis Design Version 8.7.1.0 BUILD&#160; 216&#160; Building Analog</text>
<line x1="924.00" y1="253.50" x2="929.00" y2="253.50" stroke="#333" stroke-width="0.8"/>
<rect x="947.2" y="251.2" width="4.6" height="4.6" fill="none" stroke="#333" stroke-width="0.8"/>
<line x1="970.00" y1="251.00" x2="975.00" y2="256.00" stroke="#333" stroke-width="0.8"/>
<line x1="975.00" y1="251.00" x2="970.00" y2="256.00" stroke="#333" stroke-width="0.8"/>
<text x="397.30" y="268.80" font-size="6.5" fill="#1a1a1a" text-anchor="start">File</text>
<text x="413.70" y="268.80" font-size="6.5" fill="#1a1a1a" text-anchor="start">Edit</text>
<text x="430.80" y="268.80" font-size="6.5" fill="#1a1a1a" text-anchor="start">Setup</text>
<text x="452.80" y="268.80" font-size="6.5" fill="#1a1a1a" text-anchor="start">Analyze</text>
<text x="481.00" y="268.80" font-size="6.5" fill="#1a1a1a" text-anchor="start">Tools</text>
<text x="502.00" y="268.80" font-size="6.5" fill="#1a1a1a" text-anchor="start">View</text>
<text x="521.20" y="268.80" font-size="6.5" fill="#1a1a1a" text-anchor="start">Utilities</text>
<text x="548.30" y="268.80" font-size="6.5" fill="#1a1a1a" text-anchor="start">Window</text>
<text x="577.40" y="268.80" font-size="6.5" fill="#1a1a1a" text-anchor="start">Help</text>
<rect x="395.00" y="271.00" width="590.00" height="1.00" fill="#dadada"/>
<rect x="395.00" y="272.00" width="137.00" height="11.50" fill="#f0f0f0"/>
<rect x="531.00" y="272.00" width="1.00" height="11.50" fill="#dcdcdc"/>
<rect x="878.50" y="272.00" width="106.50" height="11.50" fill="#f0f0f0"/>
<rect x="395.00" y="283.50" width="590.00" height="1.20" fill="#c4c4c4"/>
<rect x="395.50" y="274.00" width="0.80" height="0.80" fill="#a0a0a0"/>
<rect x="881.00" y="274.00" width="0.80" height="0.80" fill="#a0a0a0"/>
<rect x="958.50" y="274.00" width="0.80" height="0.80" fill="#a0a0a0"/>
<rect x="395.50" y="276.00" width="0.80" height="0.80" fill="#a0a0a0"/>
<rect x="881.00" y="276.00" width="0.80" height="0.80" fill="#a0a0a0"/>
<rect x="958.50" y="276.00" width="0.80" height="0.80" fill="#a0a0a0"/>
<rect x="395.50" y="278.00" width="0.80" height="0.80" fill="#a0a0a0"/>
<rect x="881.00" y="278.00" width="0.80" height="0.80" fill="#a0a0a0"/>
<rect x="958.50" y="278.00" width="0.80" height="0.80" fill="#a0a0a0"/>
<rect x="395.50" y="280.00" width="0.80" height="0.80" fill="#a0a0a0"/>
<rect x="881.00" y="280.00" width="0.80" height="0.80" fill="#a0a0a0"/>
<rect x="958.50" y="280.00" width="0.80" height="0.80" fill="#a0a0a0"/>
<rect x="395.50" y="282.00" width="0.80" height="0.80" fill="#a0a0a0"/>
<rect x="881.00" y="282.00" width="0.80" height="0.80" fill="#a0a0a0"/>
<rect x="958.50" y="282.00" width="0.80" height="0.80" fill="#a0a0a0"/>
<rect x="956.50" y="273.00" width="0.80" height="10.00" fill="#d0d0d0"/>
<rect x="400.3" y="275.3" width="6" height="5.6" fill="#8a8a10" stroke="#202000" stroke-width="0.7"/>
<path d="M411.5,277 L414,277 L415,276 L418,276 L419.5,278 L418,281.5 L411.5,281.5 Z" fill="#b0a820" stroke="#404000" stroke-width="0.6"/>
<path d="M416,275.5 Q418.5,274 419.5,276" fill="none" stroke="#333" stroke-width="0.6"/>
<path d="M423.5,281 L427.5,275.5 L431.5,281 Z" fill="#d01020"/><path d="M427.5,276 L431.5,281 L428,281 Z" fill="#101080"/><circle cx="428.3" cy="278.8" r="1.2" fill="#c020c0"/><path d="M423.5,281 L425.5,278.5 L426.5,281 Z" fill="#c0c020"/><rect x="423.3" y="281.3" width="8.2" height="0.8" fill="#555"/><rect x="430" y="274" width="1" height="1.5" fill="#666"/>
<path d="M435.5,281 L439.5,275.8 L443.5,281 Z" fill="#d01020"/><path d="M439.5,276 L443.5,281 L440,281 Z" fill="#101080"/><circle cx="440.3" cy="279" r="1.2" fill="#c020c0"/><path d="M435.5,281 L437.5,278.5 L438.5,281 Z" fill="#c0c020"/><rect x="435.3" y="281.3" width="8.2" height="0.8" fill="#555"/>
<rect x="448.3" y="275" width="6.6" height="7" fill="#7a7a10" stroke="#222" stroke-width="0.7"/><rect x="449.8" y="275.3" width="3.6" height="2.3" fill="#e8e8e8"/><rect x="452.5" y="279.5" width="1" height="1" fill="#ddd"/>
<path d="M459.5,281 L463,276 L466.5,281" fill="none" stroke="#999" stroke-width="0.9"/><path d="M460.5,277 L465.5,281 M465.5,277 L460.5,281" stroke="#e05010" stroke-width="1.1"/>
<path d="M473.5,278 L474.5,275 L478.5,275 L479.5,278" fill="#ccc" stroke="#444" stroke-width="0.7"/><rect x="472.5" y="278" width="8" height="3.6" rx="1" fill="#888" stroke="#333" stroke-width="0.6"/><rect x="474" y="279.5" width="3" height="0.8" fill="#e0e060"/>
<path d="M485.5,278 L486.5,275 L490.5,275 L491.5,278" fill="#ccc" stroke="#444" stroke-width="0.7"/><rect x="484.5" y="278" width="8" height="3.6" rx="1" fill="#888" stroke="#333" stroke-width="0.6"/><rect x="486" y="279.5" width="3" height="0.8" fill="#e0e060"/>
<path d="M496.5,275 L501,275 L502.5,276.5 L502.5,281.5 L496.5,281.5 Z" fill="#fff" stroke="#444" stroke-width="0.7"/><circle cx="500.5" cy="279" r="1.5" fill="#60c0c0" stroke="#222" stroke-width="0.6"/><path d="M501.5,280 L503.5,282.2" stroke="#222" stroke-width="0.8"/>
<rect x="508.3" y="275.3" width="7.6" height="6.2" rx="1.2" fill="#bbb" stroke="#444" stroke-width="0.7"/><rect x="510.5" y="276.5" width="3.8" height="3.6" fill="#e04010"/><rect x="510.5" y="278.3" width="1.9" height="1.8" fill="#20b020"/><rect x="512.4" y="276.5" width="1.9" height="1.8" fill="#f0d000"/>
<path d="M521.5,275 L525,275 L525,282 L522,283 Z" fill="#108070" stroke="#222" stroke-width="0.6"/><path d="M525,275 L527,275 L527,281" fill="none" stroke="#444" stroke-width="0.6"/><path d="M526,279 L529,277.5 L529,280.5 Z" fill="#1030e0"/>
<path d="M885.5,281.5 L889.5,277 L893.5,281.5 Z" fill="#101080"/><path d="M886,281.5 L889,278.5 L890,281.5 Z" fill="#e0c000"/><path d="M887,277.5 L890.5,275 M886.5,276 L889.5,278" stroke="#222" stroke-width="0.8"/><circle cx="889.5" cy="278.8" r="1" fill="#d01010"/>
<rect x="897.3" y="275.3" width="7.6" height="6.4" fill="#555" stroke="#222" stroke-width="0.6"/><rect x="898.3" y="276.3" width="5.6" height="1" fill="#ddd"/><path d="M898.5,280.5 L900.5,279 L902,280 L904,278" stroke="#ddd" stroke-width="0.8" fill="none"/>
<path d="M909.5,281.5 L913,275.5 L916.5,281.5 Z" fill="#222"/><path d="M911,281.5 L913,278.5 L915,281.5 Z" fill="#e0d000"/><rect x="909.5" y="275" width="2" height="1.5" fill="#8080e0"/>
<path d="M922,282 L923.5,277 L930,275.5 L928.5,280.5 Z" fill="#888" stroke="#333" stroke-width="0.9"/><path d="M923,279 L929.5,277.5 M922.5,280.5 L929,279" stroke="#ddd" stroke-width="0.6"/><circle cx="923.5" cy="281" r="1" fill="#333"/>
<path d="M934,276.5 L936.5,275 L937.5,277 L935,278.5 Z" fill="#222"/><path d="M936,277.5 L941,282" stroke="#2030c0" stroke-width="1.6"/><circle cx="934.5" cy="276" r="0.8" fill="#60c0e0"/>
<circle cx="949.5" cy="278.5" r="3.6" fill="#1040c0" stroke="#111" stroke-width="0.5"/><path d="M947.5,276.5 L950.5,278 L948.5,281 Z" fill="#20c020"/><path d="M949,279 L951.5,277.5" stroke="#e0e000" stroke-width="0.8"/>
<path d="M963.5,276 L970.5,276 L967,280.5 Z" fill="none" stroke="#b03030" stroke-width="0.7"/><path d="M965,278 L968.5,279" stroke="#555" stroke-width="0.6"/>
<text x="974.6" y="282.6" font-size="9.6" font-family="Liberation Sans" fill="#2424b4" stroke="#2424b4" stroke-width="0.35">A</text>
<rect x="426" y="293.3" width="529" height="1.3" fill="#b4b4b4"/>
<rect x="427.15" y="291.7" width="0.9" height="4" fill="#555"/>
<rect x="432.85" y="291.7" width="0.9" height="4" fill="#555"/>
<rect x="477.85" y="291.7" width="0.9" height="4" fill="#555"/>
<rect x="516.35" y="291.7" width="0.9" height="4" fill="#555"/>
<rect x="554.95" y="291.7" width="0.9" height="4" fill="#555"/>
<rect x="593.75" y="291.7" width="0.9" height="4" fill="#555"/>
<rect x="625.15" y="291.7" width="0.9" height="4" fill="#555"/>
<rect x="656.85" y="291.7" width="0.9" height="4" fill="#555"/>
<rect x="688.25" y="291.7" width="0.9" height="4" fill="#555"/>
<rect x="719.95" y="291.7" width="0.9" height="4" fill="#555"/>
<rect x="751.95" y="291.7" width="0.9" height="4" fill="#555"/>
<rect x="785.05" y="291.7" width="0.9" height="4" fill="#555"/>
<rect x="824.85" y="291.7" width="0.9" height="4" fill="#555"/>
<rect x="864.65" y="291.7" width="0.9" height="4" fill="#555"/>
<rect x="904.85" y="291.7" width="0.9" height="4" fill="#555"/>
<rect x="943.35" y="291.7" width="0.9" height="4" fill="#555"/>
<rect x="949.75" y="291.7" width="0.9" height="4" fill="#555"/>
<text x="430.5" y="291.9" font-size="4.6" fill="#6a6a6a" text-anchor="middle" letter-spacing="-0.1">0-11-10</text>
<text x="430.5" y="301.6" font-size="4.6" fill="#5a5a5a" text-anchor="middle" letter-spacing="-0.1">-0-11-10</text>
<text x="455.8" y="291.9" font-size="4.6" fill="#6a6a6a" text-anchor="middle" letter-spacing="-0.1">7-1-1</text>
<text x="455.8" y="301.6" font-size="4.6" fill="#5a5a5a" text-anchor="middle" letter-spacing="-0.1">7-1-1</text>
<text x="497.5" y="291.9" font-size="4.6" fill="#6a6a6a" text-anchor="middle" letter-spacing="-0.1">6-0-8</text>
<text x="497.5" y="301.6" font-size="4.6" fill="#5a5a5a" text-anchor="middle" letter-spacing="-0.1">13-1-8</text>
<text x="536.1" y="291.9" font-size="4.6" fill="#6a6a6a" text-anchor="middle" letter-spacing="-0.1">6-0-8</text>
<text x="536.1" y="301.6" font-size="4.6" fill="#5a5a5a" text-anchor="middle" letter-spacing="-0.1">19-2-2</text>
<text x="574.8" y="291.9" font-size="4.6" fill="#6a6a6a" text-anchor="middle" letter-spacing="-0.1">6-0-8</text>
<text x="574.8" y="301.6" font-size="4.6" fill="#5a5a5a" text-anchor="middle" letter-spacing="-0.1">25-2-10</text>
<text x="609.9" y="291.9" font-size="4.6" fill="#6a6a6a" text-anchor="middle" letter-spacing="-0.1">4-11-10</text>
<text x="609.9" y="301.6" font-size="4.6" fill="#5a5a5a" text-anchor="middle" letter-spacing="-0.1">30-2-4</text>
<text x="641.5" y="291.9" font-size="4.6" fill="#6a6a6a" text-anchor="middle" letter-spacing="-0.1">4-11-10</text>
<text x="641.5" y="301.6" font-size="4.6" fill="#5a5a5a" text-anchor="middle" letter-spacing="-0.1">35-1-15</text>
<text x="673.0" y="291.9" font-size="4.6" fill="#6a6a6a" text-anchor="middle" letter-spacing="-0.1">4-11-10</text>
<text x="673.0" y="301.6" font-size="4.6" fill="#5a5a5a" text-anchor="middle" letter-spacing="-0.1">40-1-9</text>
<text x="704.5" y="291.9" font-size="4.6" fill="#6a6a6a" text-anchor="middle" letter-spacing="-0.1">5-0-8</text>
<text x="704.5" y="301.6" font-size="4.6" fill="#5a5a5a" text-anchor="middle" letter-spacing="-0.1">45-2-1</text>
<text x="736.4" y="291.9" font-size="4.6" fill="#6a6a6a" text-anchor="middle" letter-spacing="-0.1">5-0-8</text>
<text x="736.4" y="301.6" font-size="4.6" fill="#5a5a5a" text-anchor="middle" letter-spacing="-0.1">50-2-10</text>
<text x="769.0" y="291.9" font-size="4.6" fill="#6a6a6a" text-anchor="middle" letter-spacing="-0.1">5-0-8</text>
<text x="769.0" y="301.6" font-size="4.6" fill="#5a5a5a" text-anchor="middle" letter-spacing="-0.1">55-3-2</text>
<text x="805.4" y="291.9" font-size="4.6" fill="#6a6a6a" text-anchor="middle" letter-spacing="-0.1">6-3-10</text>
<text x="805.4" y="301.6" font-size="4.6" fill="#5a5a5a" text-anchor="middle" letter-spacing="-0.1">61-6-12</text>
<text x="845.2" y="291.9" font-size="4.6" fill="#6a6a6a" text-anchor="middle" letter-spacing="-0.1">6-3-10</text>
<text x="845.2" y="301.6" font-size="4.6" fill="#5a5a5a" text-anchor="middle" letter-spacing="-0.1">67-10-6</text>
<text x="885.2" y="291.9" font-size="4.6" fill="#6a6a6a" text-anchor="middle" letter-spacing="-0.1">6-3-10</text>
<text x="885.2" y="301.6" font-size="4.6" fill="#5a5a5a" text-anchor="middle" letter-spacing="-0.1">74-1-15</text>
<text x="924.5" y="291.9" font-size="4.6" fill="#6a6a6a" text-anchor="middle" letter-spacing="-0.1">6-1-3</text>
<text x="924.5" y="301.6" font-size="4.6" fill="#5a5a5a" text-anchor="middle" letter-spacing="-0.1">80-3-2</text>
<text x="947.0" y="291.9" font-size="4.6" fill="#6a6a6a" text-anchor="middle" letter-spacing="-0.1">0-11-10</text>
<text x="947.0" y="301.6" font-size="4.6" fill="#5a5a5a" text-anchor="middle" letter-spacing="-0.1">81-2-12</text>
<line x1="479.0" y1="422.37" x2="479.0" y2="438.4" stroke="#5e5e5e" stroke-width="2.0"/>
<line x1="516.8" y1="409.77" x2="516.8" y2="438.4" stroke="#5e5e5e" stroke-width="2.0"/>
<line x1="555.4" y1="396.90" x2="555.4" y2="438.4" stroke="#5e5e5e" stroke-width="2.0"/>
<line x1="594.2" y1="383.90" x2="594.2" y2="438.4" stroke="#5e5e5e" stroke-width="2.0"/>
<line x1="625.60" y1="383.90" x2="625.60" y2="438.40" stroke="#3c3c3c" stroke-width="2.60" stroke-linecap="butt"/>
<line x1="625.60" y1="383.90" x2="625.60" y2="438.40" stroke="#c8c8c8" stroke-width="1.40" stroke-linecap="butt"/>
<line x1="657.3" y1="383.90" x2="657.3" y2="438.4" stroke="#5e5e5e" stroke-width="2.0"/>
<line x1="688.70" y1="383.90" x2="688.70" y2="438.40" stroke="#3c3c3c" stroke-width="2.60" stroke-linecap="butt"/>
<line x1="688.70" y1="383.90" x2="688.70" y2="438.40" stroke="#f0b020" stroke-width="1.40" stroke-linecap="butt"/>
<line x1="720.4" y1="383.90" x2="720.4" y2="438.4" stroke="#5e5e5e" stroke-width="2.0"/>
<line x1="752.40" y1="383.90" x2="752.40" y2="438.40" stroke="#3c3c3c" stroke-width="2.80" stroke-linecap="butt"/>
<line x1="752.40" y1="383.90" x2="752.40" y2="438.40" stroke="#c8c8c8" stroke-width="1.60" stroke-linecap="butt"/>
<line x1="785.5" y1="383.90" x2="785.5" y2="438.4" stroke="#5e5e5e" stroke-width="2.0"/>
<line x1="825.3" y1="397.38" x2="825.3" y2="438.4" stroke="#5e5e5e" stroke-width="2.0"/>
<line x1="865.1" y1="410.85" x2="865.1" y2="438.4" stroke="#5e5e5e" stroke-width="2.0"/>
<line x1="905.3" y1="424.46" x2="905.3" y2="438.4" stroke="#5e5e5e" stroke-width="2.0"/>
<line x1="480.90" y1="422.37" x2="514.90" y2="438.40" stroke="#3c3c3c" stroke-width="2.90" stroke-linecap="butt"/>
<line x1="480.90" y1="422.37" x2="514.90" y2="438.40" stroke="#ffffff" stroke-width="1.60" stroke-linecap="butt"/>
<line x1="518.70" y1="409.77" x2="553.50" y2="438.40" stroke="#3c3c3c" stroke-width="2.90" stroke-linecap="butt"/>
<line x1="518.70" y1="409.77" x2="553.50" y2="438.40" stroke="#f0b020" stroke-width="1.60" stroke-linecap="butt"/>
<line x1="557.30" y1="396.90" x2="592.30" y2="438.40" stroke="#3c3c3c" stroke-width="2.90" stroke-linecap="butt"/>
<line x1="557.30" y1="396.90" x2="592.30" y2="438.40" stroke="#22e01a" stroke-width="1.60" stroke-linecap="butt"/>
<line x1="596.10" y1="383.90" x2="623.70" y2="438.40" stroke="#3c3c3c" stroke-width="2.90" stroke-linecap="butt"/>
<line x1="596.10" y1="383.90" x2="623.70" y2="438.40" stroke="#22e01a" stroke-width="1.60" stroke-linecap="butt"/>
<line x1="627.50" y1="438.40" x2="655.40" y2="383.90" stroke="#3c3c3c" stroke-width="2.90" stroke-linecap="butt"/>
<line x1="627.50" y1="438.40" x2="655.40" y2="383.90" stroke="#f0b020" stroke-width="1.60" stroke-linecap="butt"/>
<line x1="659.20" y1="383.90" x2="686.80" y2="438.40" stroke="#3c3c3c" stroke-width="2.90" stroke-linecap="butt"/>
<line x1="659.20" y1="383.90" x2="686.80" y2="438.40" stroke="#f0b020" stroke-width="1.60" stroke-linecap="butt"/>
<line x1="690.60" y1="438.40" x2="718.50" y2="383.90" stroke="#3c3c3c" stroke-width="2.90" stroke-linecap="butt"/>
<line x1="690.60" y1="438.40" x2="718.50" y2="383.90" stroke="#f0b020" stroke-width="1.60" stroke-linecap="butt"/>
<line x1="722.30" y1="383.90" x2="750.50" y2="438.40" stroke="#3c3c3c" stroke-width="2.90" stroke-linecap="butt"/>
<line x1="722.30" y1="383.90" x2="750.50" y2="438.40" stroke="#f0b020" stroke-width="1.60" stroke-linecap="butt"/>
<line x1="754.30" y1="438.40" x2="783.60" y2="383.90" stroke="#3c3c3c" stroke-width="2.90" stroke-linecap="butt"/>
<line x1="754.30" y1="438.40" x2="783.60" y2="383.90" stroke="#22e01a" stroke-width="1.60" stroke-linecap="butt"/>
<line x1="787.40" y1="438.40" x2="823.40" y2="397.38" stroke="#3c3c3c" stroke-width="2.90" stroke-linecap="butt"/>
<line x1="787.40" y1="438.40" x2="823.40" y2="397.38" stroke="#22e01a" stroke-width="1.60" stroke-linecap="butt"/>
<line x1="827.20" y1="438.40" x2="863.20" y2="410.85" stroke="#3c3c3c" stroke-width="2.90" stroke-linecap="butt"/>
<line x1="827.20" y1="438.40" x2="863.20" y2="410.85" stroke="#f0b020" stroke-width="1.60" stroke-linecap="butt"/>
<line x1="867.00" y1="438.40" x2="903.40" y2="424.46" stroke="#3c3c3c" stroke-width="2.90" stroke-linecap="butt"/>
<line x1="867.00" y1="438.40" x2="903.40" y2="424.46" stroke="#ffffff" stroke-width="1.60" stroke-linecap="butt"/>
<line x1="594.20" y1="383.90" x2="785.50" y2="383.90" stroke="#3c3c3c" stroke-width="3.40" stroke-linecap="butt"/>
<line x1="594.20" y1="383.90" x2="785.50" y2="383.90" stroke="#c8c8c8" stroke-width="2.00" stroke-linecap="butt"/>
<line x1="427.50" y1="438.40" x2="949.50" y2="438.40" stroke="#3c3c3c" stroke-width="3.20" stroke-linecap="butt"/>
<line x1="427.50" y1="438.40" x2="949.50" y2="438.40" stroke="#22e01a" stroke-width="2.00" stroke-linecap="butt"/>
<line x1="426.80" y1="440.60" x2="596.00" y2="383.30" stroke="#3c3c3c" stroke-width="3.30" stroke-linecap="butt"/>
<line x1="426.80" y1="440.60" x2="596.00" y2="383.30" stroke="#22e01a" stroke-width="2.10" stroke-linecap="butt"/>
<line x1="783.80" y1="383.30" x2="950.00" y2="441.00" stroke="#3c3c3c" stroke-width="3.30" stroke-linecap="butt"/>
<line x1="783.80" y1="383.30" x2="950.00" y2="441.00" stroke="#22e01a" stroke-width="2.10" stroke-linecap="butt"/>
<rect x="693.5" y="436.7" width="7" height="3.4" fill="#22f01a" stroke="#333" stroke-width="0.5"/>
<rect x="436.5" y="436.9" width="6.5" height="3" fill="#f0b020" stroke="#3c3c3c" stroke-width="0.5"/>
<rect x="935.5" y="436.9" width="8" height="3" fill="#f0b020" stroke="#3c3c3c" stroke-width="0.5"/>
<rect x="434.5" y="436" width="1" height="5" fill="#222"/>
<rect x="941.5" y="436" width="1" height="5" fill="#222"/>
<path d="M435.8,440.5 L435.8,443.5 M433.6,443.6 L438.0,443.6" stroke="#3040e0" stroke-width="0.9" fill="none"/>
<path d="M688.7,440.5 L688.7,443.5 M686.5,443.6 L690.9000000000001,443.6" stroke="#3040e0" stroke-width="0.9" fill="none"/>
<path d="M941.6,440.5 L941.6,443.5 M939.4,443.6 L943.8000000000001,443.6" stroke="#3040e0" stroke-width="0.9" fill="none"/>
<path d="M415.5,382.6 L413.8,382.6 L413.8,440.4 L415.5,440.4" stroke="#8a8a8a" stroke-width="0.8" fill="none"/>
<text x="0" y="0" font-size="3.6" fill="#5060a0" text-anchor="middle" transform="translate(412.2,411.6) rotate(-90)">9-0-0</text>
<text x="0" y="0" font-size="3.2" fill="#777" text-anchor="middle" transform="translate(421,434.5) rotate(-90)">0-5-4</text>
<path d="M422.5,432 L424.5,432 M423.5,432 L423.5,439 M422.5,439 L424.5,439" stroke="#555" stroke-width="0.5" fill="none"/>
<text x="0" y="0" font-size="3.2" fill="#777" text-anchor="middle" transform="translate(957.5,437) rotate(-90)">0-5-4</text>
<path d="M955,434 L957,434 L957,440 L955,440" stroke="#555" stroke-width="0.5" fill="none"/>
<text x="479.0" y="447.8" font-size="3.6" fill="#555" text-anchor="middle">AG</text>
<text x="516.8" y="447.8" font-size="3.6" fill="#555" text-anchor="middle">AF</text>
<text x="555.4" y="447.8" font-size="3.6" fill="#555" text-anchor="middle">AE</text>
<text x="594.2" y="447.8" font-size="3.6" fill="#555" text-anchor="middle">AD</text>
<text x="625.6" y="447.8" font-size="3.6" fill="#555" text-anchor="middle">AC</text>
<text x="657.3" y="447.8" font-size="3.6" fill="#555" text-anchor="middle">AB</text>
<text x="688.7" y="447.8" font-size="3.6" fill="#555" text-anchor="middle">AA</text>
<text x="696.9" y="447.8" font-size="3.6" fill="#555" text-anchor="middle">Z</text>
<text x="720.4" y="447.8" font-size="3.6" fill="#555" text-anchor="middle">Y</text>
<text x="752.4" y="447.8" font-size="3.6" fill="#555" text-anchor="middle">X</text>
<text x="785.5" y="447.8" font-size="3.6" fill="#555" text-anchor="middle">W</text>
<text x="825.3" y="447.8" font-size="3.6" fill="#555" text-anchor="middle">V</text>
<text x="865.1" y="447.8" font-size="3.6" fill="#555" text-anchor="middle">U</text>
<text x="905.3" y="447.8" font-size="3.6" fill="#555" text-anchor="middle">T</text>
<text x="697.5" y="452.5" font-size="3.2" fill="#666" text-anchor="middle">60US/WD057x12"</text>
<text x="478.5" y="420.3" font-size="3.4" fill="#444" text-anchor="middle">D</text>
<text x="516.5" y="407.5" font-size="3.4" fill="#444" text-anchor="middle">E</text>
<text x="553.6" y="394.5" font-size="3.4" fill="#444" text-anchor="middle">F</text>
<text x="594.2" y="381.2" font-size="3.4" fill="#444" text-anchor="middle">G</text>
<text x="625.4" y="381.2" font-size="3.4" fill="#444" text-anchor="middle">H</text>
<text x="657.0" y="381.2" font-size="3.4" fill="#444" text-anchor="middle">I</text>
<text x="689.0" y="381.2" font-size="3.4" fill="#444" text-anchor="middle">J</text>
<text x="720.4" y="381.2" font-size="3.4" fill="#444" text-anchor="middle">K</text>
<text x="752.4" y="381.2" font-size="3.4" fill="#444" text-anchor="middle">L</text>
<text x="785.5" y="381.2" font-size="3.4" fill="#444" text-anchor="middle">M</text>
<text x="824.7" y="394.5" font-size="3.4" fill="#444" text-anchor="middle">N</text>
<text x="864.5" y="408.0" font-size="3.4" fill="#444" text-anchor="middle">O</text>
<text x="904.7" y="422.0" font-size="3.4" fill="#444" text-anchor="middle">P</text>
<text x="430.5" y="434.8" font-size="3.4" fill="#444" text-anchor="middle">B</text>
<text x="946.0" y="434.8" font-size="3.4" fill="#444" text-anchor="middle">Q</text>
<text x="424.0" y="436.5" font-size="3.4" fill="#444" text-anchor="middle">A</text>
<text x="950.5" y="437.0" font-size="3.4" fill="#444" text-anchor="middle">R</text>
<text x="594.0" y="376.2" font-size="3.3" fill="#666" text-anchor="middle">5X5US/JD073x10</text>
<text x="784.0" y="376.2" font-size="3.3" fill="#666" text-anchor="middle">5X5US/JD073x10</text>
<text x="479.0" y="425.5" font-size="3.3" fill="#666" text-anchor="middle">W1</text>
<text x="494.5" y="424.0" font-size="3.3" fill="#666" text-anchor="middle">W2</text>
<text x="516.8" y="414.5" font-size="3.3" fill="#666" text-anchor="middle">W3</text>
<text x="535.0" y="414.5" font-size="3.3" fill="#666" text-anchor="middle">W4</text>
<text x="555.4" y="412.5" font-size="3.3" fill="#666" text-anchor="middle">W5</text>
<text x="575.0" y="410.5" font-size="3.3" fill="#666" text-anchor="middle">W6</text>
<text x="594.2" y="405.6" font-size="3.3" fill="#666" text-anchor="middle">W7</text>
<text x="610.0" y="405.6" font-size="3.3" fill="#666" text-anchor="middle">W8</text>
<text x="625.6" y="405.6" font-size="3.3" fill="#666" text-anchor="middle">W9</text>
<text x="641.0" y="405.6" font-size="3.3" fill="#666" text-anchor="middle">W10</text>
<text x="657.3" y="405.6" font-size="3.3" fill="#666" text-anchor="middle">W11</text>
<text x="673.5" y="405.6" font-size="3.3" fill="#666" text-anchor="middle">W12</text>
<text x="688.7" y="405.6" font-size="3.3" fill="#666" text-anchor="middle">W13</text>
<text x="704.5" y="405.6" font-size="3.3" fill="#666" text-anchor="middle">W14</text>
<text x="720.4" y="405.6" font-size="3.3" fill="#666" text-anchor="middle">W15</text>
<text x="736.5" y="405.6" font-size="3.3" fill="#666" text-anchor="middle">W16</text>
<text x="752.4" y="405.6" font-size="3.3" fill="#666" text-anchor="middle">W17</text>
<text x="769.0" y="405.6" font-size="3.3" fill="#666" text-anchor="middle">W18</text>
<text x="785.5" y="405.6" font-size="3.3" fill="#666" text-anchor="middle">W19</text>
<text x="805.0" y="412.5" font-size="3.3" fill="#666" text-anchor="middle">W20</text>
<text x="825.3" y="413.8" font-size="3.3" fill="#666" text-anchor="middle">W21</text>
<text x="845.0" y="420.8" font-size="3.3" fill="#666" text-anchor="middle">W22</text>
<text x="865.1" y="421.6" font-size="3.3" fill="#666" text-anchor="middle">W23</text>
<text x="884.0" y="427.4" font-size="3.3" fill="#666" text-anchor="middle">W24</text>
<text x="905.3" y="428.0" font-size="3.3" fill="#666" text-anchor="middle">W25</text>
<text x="568.0" y="437.2" font-size="3.3" fill="#666" text-anchor="middle">B1</text>
<text x="818.0" y="437.2" font-size="3.3" fill="#666" text-anchor="middle">B2</text>
<text x="702.0" y="437.2" font-size="3.3" fill="#666" text-anchor="middle">C1</text>
<text x="497.8" y="388.8" font-size="3.4" fill="#555" text-anchor="middle">4.00</text>
<path d="M501.8,389.8 L501.8,385.4 L507.5,385.4" stroke="#333" stroke-width="0.6" fill="none"/>
<text x="504.8" y="388.9" font-size="3.3" fill="#555" text-anchor="middle">12</text>
<text x="421.6" y="417.4" font-size="3.0" fill="#555" text-anchor="start">T00US/JD073x18</text>
<text x="421.6" y="420.9" font-size="3.0" fill="#555" text-anchor="start">7' 2T5US/HD057</text>
<text x="421.6" y="424.4" font-size="3.0" fill="#555" text-anchor="start">w/4 sds</text>
<text x="928.0" y="417.0" font-size="3.0" fill="#555" text-anchor="start">T00US/JD073x16</text>
<text x="928.0" y="420.5" font-size="3.0" fill="#555" text-anchor="start">8' 2T5US/HD057</text>
<text x="928.0" y="424.0" font-size="3.0" fill="#555" text-anchor="start">w/4 sds</text>
<line x1="0.0" y1="484.0" x2="2.0" y2="480.0" stroke="#888" stroke-width="1"/>
</svg>

</body></html>
